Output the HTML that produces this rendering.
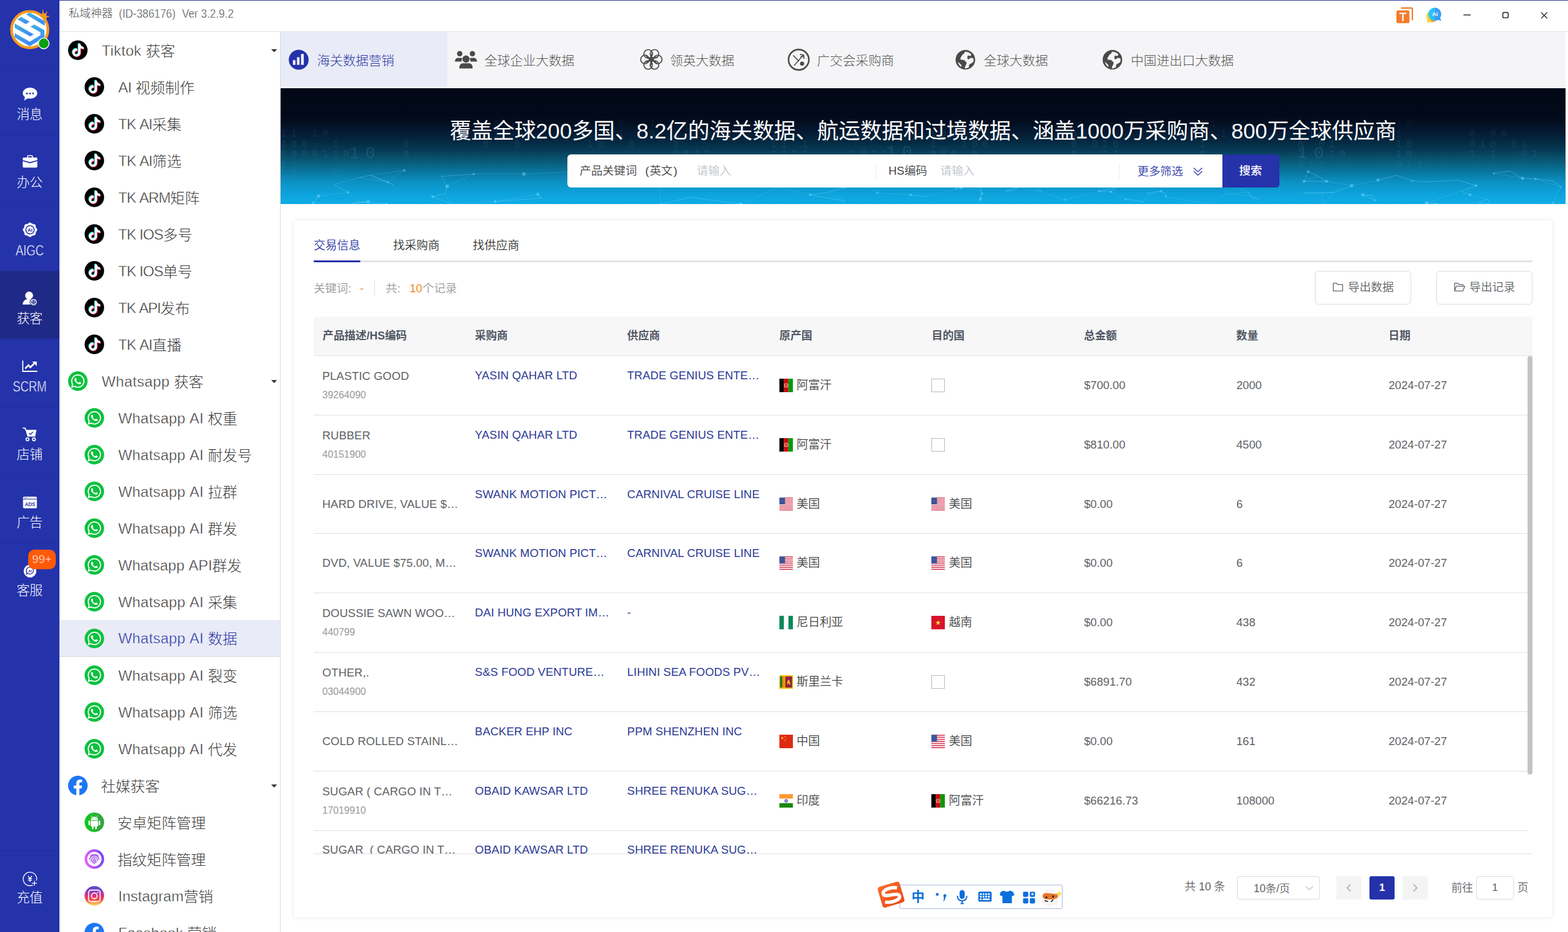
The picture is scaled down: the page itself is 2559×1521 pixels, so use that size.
<!DOCTYPE html>
<html lang="zh-CN"><head><meta charset="utf-8"><title>私域神器</title>
<style>
*{box-sizing:border-box;margin:0;padding:0}
html,body{width:2559px;height:1521px;overflow:hidden;background:#fff}
body{position:relative;font-family:"Liberation Sans","Noto Sans CJK SC",sans-serif;color:#444;-webkit-font-smoothing:antialiased}
.a{position:absolute}
.t{position:absolute;white-space:nowrap;line-height:40px;height:40px}
.lt{font-weight:300}
svg{position:absolute;overflow:visible}
#nav{left:0;top:0;width:97px;height:1521px;background:#2433aa}
#nav .sep{position:absolute;left:0;width:97px;height:2px;background:#2130a1}
#nav .lbl{position:absolute;left:0;width:97px;text-align:center;color:#fff;font-size:21.4px;letter-spacing:-0.3px;text-indent:-0.3px;line-height:30px;height:30px;font-weight:300}
#title{left:97px;top:0;width:2462px;height:52px;background:#fff;border-top:1px solid #2b3494;border-bottom:1px solid #e3e3e3}
#side{left:97px;top:52px;width:361px;height:1469px;background:#fff;border-right:1px solid #dcdcdc;overflow:hidden}
#side .it{position:absolute;left:0;width:360px;height:60px}
#side .it .tx{position:absolute;top:11.8px;height:40px;line-height:40px;font-size:24px;font-weight:300;color:#3a3a3a;white-space:nowrap}
#side .it .tx .l{position:relative;top:-1.1px;-webkit-text-stroke:0.45px #fff}
#side .it.act .tx .l{-webkit-text-stroke:0.45px #e9ebf6}
#side .it.act{background:#e9ebf6;border-bottom:1px solid #d6d8e2}
#side .it.act .tx{margin-top:-0.5px}
#side .it.act .tx{color:#2a36a6}
#tabs{left:458px;top:52px;width:2097px;height:92px;background:#f5f5f7}
#tabs .tx{position:absolute;top:26.7px;height:40px;line-height:40px;font-size:21px;color:#555;white-space:nowrap}
#banner{left:458px;top:144px;width:2097px;height:189px;overflow:hidden;background:linear-gradient(180deg,rgb(2,8,22) 0%,rgb(2,9,25) 22%,rgb(3,14,32) 29%,rgb(4,22,45) 35%,rgb(5,33,58) 42%,rgb(5,45,70) 48%,rgb(6,62,88) 54.5%,rgb(8,84,112) 61%,rgb(9,104,138) 67.5%,rgb(10,124,166) 74%,rgb(11,142,192) 80%,rgb(12,155,210) 86.5%,rgb(14,165,222) 93%,rgb(16,171,229) 100%)}
#card{left:480px;top:359.5px;width:2053px;height:1137.5px;background:#fff;box-shadow:0 0 8px rgba(0,0,0,.09);border-radius:3px}
.th{position:absolute;top:517px;height:63px;line-height:63px;font-size:17.95px;font-weight:700;color:#515763;white-space:nowrap}
.row{position:absolute;left:512px;width:1981px;height:97px;border-bottom:1px solid #e4e6eb}
.c{position:absolute;white-space:nowrap;font-size:18.67px;line-height:26px;height:26px;color:#606266;overflow:hidden}
.u{letter-spacing:0.13px}
.lk{color:#2b3a94}
.hs{font-size:16px;color:#999}
.cn{font-size:19.1px;letter-spacing:-0.2px;color:#444;font-weight:350}
</style>
</head><body>
<div id="tabs" class="a">
<div class="a" style="left:0;top:0;width:272px;height:89px;background:#e9ebf6"></div>
<div class="a" style="left:0;top:91px;width:2097px;height:1px;background:#e6ebe6"></div>
<svg style="left:12.8px;top:28.7px" width="33" height="33" viewBox="0 0 33 33"><circle cx="16.5" cy="16.5" r="16.2" fill="#2531a9"/><rect x="7" y="17.2" width="4.2" height="7.6" fill="#eceefb"/><rect x="13.6" y="12.4" width="4.2" height="12.4" fill="#eceefb"/><rect x="20.2" y="7" width="4.6" height="17.8" fill="#eceefb"/></svg>
<div class="tx lt" style="left:59.6px;color:#2d3aa6">海关数据营销</div>
<svg style="left:283.5px;top:30.8px" width="37" height="30" viewBox="0 0 37 30"><circle cx="8.2" cy="4.6" r="4.4" fill="#4a4a4a"/><circle cx="29" cy="4.6" r="4.4" fill="#4a4a4a"/><path d="M0.4 17.6 C0.6 13.4 2.6 11.4 5.6 11.4 H10 C11 11.4 12 11.7 12.8 12.3 C11.5 13.8 11 15.6 11.4 17.6 Z" fill="#4a4a4a"/><path d="M36.6 17.6 C36.4 13.4 34.4 11.4 31.4 11.4 H27 C26 11.4 25 11.7 24.2 12.3 C25.5 13.8 26 15.6 25.6 17.6 Z" fill="#4a4a4a"/><circle cx="18.5" cy="13.4" r="5.8" fill="#4a4a4a"/><path d="M7.6 27.4 C7.8 22.6 10.4 20.2 14 20.2 H23 C26.6 20.2 29.2 22.6 29.4 27.4 Q29.4 28.8 28 28.8 H9 Q7.6 28.8 7.6 27.4 Z" fill="#4a4a4a"/></svg>
<div class="tx lt" style="left:332.4px;color:#555">全球企业大数据</div>
<svg style="left:586px;top:27.2px" width="38" height="36" viewBox="-19 -18 38 36"><g fill="none" stroke="#4a4a4a" stroke-width="1.7"><circle cx="10.40" cy="0.00" r="7"/><circle cx="5.20" cy="9.01" r="7"/><circle cx="-5.20" cy="9.01" r="7"/><circle cx="-10.40" cy="0.00" r="7"/><circle cx="-5.20" cy="-9.01" r="7"/><circle cx="5.20" cy="-9.01" r="7"/><path d="M0 0 Q 5 -6 10 -5.4" transform="rotate(10)" stroke-width="1.9"/><path d="M0 0 Q 5 -6 10 -5.4" transform="rotate(70)" stroke-width="1.9"/><path d="M0 0 Q 5 -6 10 -5.4" transform="rotate(130)" stroke-width="1.9"/><path d="M0 0 Q 5 -6 10 -5.4" transform="rotate(190)" stroke-width="1.9"/><path d="M0 0 Q 5 -6 10 -5.4" transform="rotate(250)" stroke-width="1.9"/><path d="M0 0 Q 5 -6 10 -5.4" transform="rotate(310)" stroke-width="1.9"/></g><circle cx="0" cy="0" r="3.2" fill="#4a4a4a"/></svg>
<div class="tx lt" style="left:635.4px;color:#555">领英大数据</div>
<svg style="left:826.5px;top:26.7px" width="37" height="37" viewBox="0 0 37 37"><circle cx="18.5" cy="18.5" r="16.6" fill="none" stroke="#4a4a4a" stroke-width="2.6"/><path d="M9.4 11.4 L19 21 M11 28 L26 11" stroke="#4a4a4a" stroke-width="1.6" fill="none"/><path d="M20.6 9.6 L26.4 11 L27.4 17 M21.4 13.6 L27.6 12.4" stroke="#4a4a4a" stroke-width="1.8" fill="none"/><circle cx="24" cy="24.8" r="3.4" fill="#4a4a4a"/></svg>
<div class="tx lt" style="left:875.2px;color:#555">广交会采购商</div>
<svg style="left:1100.5px;top:28.7px" width="33" height="33" viewBox="0 0 33 33"><circle cx="16.5" cy="16.5" r="16" fill="#4a4a4a"/><path d="M16 3.4 L13.6 7.2 L11.8 8 L10.2 11 L8.4 13.6 L8.8 16.4 L11.4 16.6 L14.4 17 L17.2 19.4 L18.6 21.4 L17.6 25 L16 27.6 L15.6 30.6 C18 30.8 20.6 30 22.6 28.6 L22.2 26 L23.8 23.4 L26.6 22.2 L29.6 19.8 C30 17.6 29.8 15.6 29.4 14.2 L26.6 13.4 L24.2 13.8 L22.8 12.2 L23.4 10.2 L25.6 9.8 L26.2 7.6 C23.6 4.8 20 3.2 16 3.4 Z" fill="#f5f5f7"/><path d="M4.2 20 C5 23.4 7 26.4 10 28.4 L9.8 25 L7.2 22.4 Z" fill="#f5f5f7"/><path d="M21 9.4 L23.4 10.2 L22.8 12.2 L24.2 13.8 L22 16 L19.6 14.6 L19.8 11.4 Z" fill="#4a4a4a"/></svg>
<div class="tx lt" style="left:1147.4px;color:#555">全球大数据</div>
<svg style="left:1340.5px;top:28.7px" width="33" height="33" viewBox="0 0 33 33"><circle cx="16.5" cy="16.5" r="16" fill="#4a4a4a"/><path d="M16 3.4 L13.6 7.2 L11.8 8 L10.2 11 L8.4 13.6 L8.8 16.4 L11.4 16.6 L14.4 17 L17.2 19.4 L18.6 21.4 L17.6 25 L16 27.6 L15.6 30.6 C18 30.8 20.6 30 22.6 28.6 L22.2 26 L23.8 23.4 L26.6 22.2 L29.6 19.8 C30 17.6 29.8 15.6 29.4 14.2 L26.6 13.4 L24.2 13.8 L22.8 12.2 L23.4 10.2 L25.6 9.8 L26.2 7.6 C23.6 4.8 20 3.2 16 3.4 Z" fill="#f5f5f7"/><path d="M4.2 20 C5 23.4 7 26.4 10 28.4 L9.8 25 L7.2 22.4 Z" fill="#f5f5f7"/><path d="M21 9.4 L23.4 10.2 L22.8 12.2 L24.2 13.8 L22 16 L19.6 14.6 L19.8 11.4 Z" fill="#4a4a4a"/></svg>
<div class="tx lt" style="left:1387.6px;color:#555">中国进出口大数据</div>
</div>
<div id="banner" class="a">
<div class="t" style="left:0px;top:66.4px;font-size:16px;line-height:18px;height:18px;color:rgba(110,185,220,0.12);letter-spacing:7.4px;font-family:'Liberation Mono',monospace">11&nbsp;10</div>
<div class="t" style="left:0px;top:82.8px;font-size:16px;line-height:18px;height:18px;color:rgba(110,185,220,0.15);letter-spacing:7.4px;font-family:'Liberation Mono',monospace">100&nbsp;&nbsp;1</div>
<div class="t" style="left:0px;top:99.2px;font-size:16px;line-height:18px;height:18px;color:rgba(110,185,220,0.15);letter-spacing:7.4px;font-family:'Liberation Mono',monospace">0000110</div>
<div class="t" style="left:0px;top:115.6px;font-size:16px;line-height:18px;height:18px;color:rgba(110,185,220,0.12);letter-spacing:7.4px;font-family:'Liberation Mono',monospace">11</div>
<div class="t" style="left:0px;top:132px;font-size:16px;line-height:18px;height:18px;color:rgba(110,185,220,0.09);letter-spacing:7.4px;font-family:'Liberation Mono',monospace">00&nbsp;&nbsp;&nbsp;0</div>
<div class="t" style="left:0px;top:148.4px;font-size:16px;line-height:18px;height:18px;color:rgba(110,185,220,0.07);letter-spacing:7.4px;font-family:'Liberation Mono',monospace">1&nbsp;000</div>
<div class="t" style="left:200px;top:82.8px;font-size:16px;line-height:18px;height:18px;color:rgba(110,185,220,0.15);letter-spacing:7.4px;font-family:'Liberation Mono',monospace">0</div>
<div class="t" style="left:200px;top:99.2px;font-size:16px;line-height:18px;height:18px;color:rgba(110,185,220,0.15);letter-spacing:7.4px;font-family:'Liberation Mono',monospace">0</div>
<div class="t" style="left:330px;top:50px;font-size:16px;line-height:18px;height:18px;color:rgba(110,185,220,0.08);letter-spacing:7.4px;font-family:'Liberation Mono',monospace">10</div>
<div class="t" style="left:330px;top:66.4px;font-size:16px;line-height:18px;height:18px;color:rgba(110,185,220,0.12);letter-spacing:7.4px;font-family:'Liberation Mono',monospace">01</div>
<div class="t" style="left:330px;top:82.8px;font-size:16px;line-height:18px;height:18px;color:rgba(110,185,220,0.15);letter-spacing:7.4px;font-family:'Liberation Mono',monospace">0&nbsp;&nbsp;0</div>
<div class="t" style="left:500px;top:50px;font-size:16px;line-height:18px;height:18px;color:rgba(110,185,220,0.08);letter-spacing:7.4px;font-family:'Liberation Mono',monospace">1000&nbsp;&nbsp;1</div>
<div class="t" style="left:500px;top:66.4px;font-size:16px;line-height:18px;height:18px;color:rgba(110,185,220,0.12);letter-spacing:7.4px;font-family:'Liberation Mono',monospace">1&nbsp;11&nbsp;&nbsp;0</div>
<div class="t" style="left:500px;top:82.8px;font-size:16px;line-height:18px;height:18px;color:rgba(110,185,220,0.15);letter-spacing:7.4px;font-family:'Liberation Mono',monospace">10&nbsp;&nbsp;0</div>
<div class="t" style="left:640px;top:50px;font-size:16px;line-height:18px;height:18px;color:rgba(110,185,220,0.08);letter-spacing:7.4px;font-family:'Liberation Mono',monospace">001</div>
<div class="t" style="left:640px;top:66.4px;font-size:16px;line-height:18px;height:18px;color:rgba(110,185,220,0.12);letter-spacing:7.4px;font-family:'Liberation Mono',monospace">1&nbsp;&nbsp;0</div>
<div class="t" style="left:640px;top:82.8px;font-size:16px;line-height:18px;height:18px;color:rgba(110,185,220,0.15);letter-spacing:7.4px;font-family:'Liberation Mono',monospace">0</div>
<div class="t" style="left:640px;top:99.2px;font-size:16px;line-height:18px;height:18px;color:rgba(110,185,220,0.15);letter-spacing:7.4px;font-family:'Liberation Mono',monospace">0011</div>
<div class="t" style="left:800px;top:66.4px;font-size:16px;line-height:18px;height:18px;color:rgba(110,185,220,0.12);letter-spacing:7.4px;font-family:'Liberation Mono',monospace">1&nbsp;1</div>
<div class="t" style="left:800px;top:82.8px;font-size:16px;line-height:18px;height:18px;color:rgba(110,185,220,0.15);letter-spacing:7.4px;font-family:'Liberation Mono',monospace">11&nbsp;1</div>
<div class="t" style="left:800px;top:99.2px;font-size:16px;line-height:18px;height:18px;color:rgba(110,185,220,0.15);letter-spacing:7.4px;font-family:'Liberation Mono',monospace">1111</div>
<div class="t" style="left:930px;top:50px;font-size:16px;line-height:18px;height:18px;color:rgba(110,185,220,0.08);letter-spacing:7.4px;font-family:'Liberation Mono',monospace">000</div>
<div class="t" style="left:930px;top:66.4px;font-size:16px;line-height:18px;height:18px;color:rgba(110,185,220,0.12);letter-spacing:7.4px;font-family:'Liberation Mono',monospace">0&nbsp;1</div>
<div class="t" style="left:930px;top:99.2px;font-size:16px;line-height:18px;height:18px;color:rgba(110,185,220,0.15);letter-spacing:7.4px;font-family:'Liberation Mono',monospace">1011</div>
<div class="t" style="left:930px;top:115.6px;font-size:16px;line-height:18px;height:18px;color:rgba(110,185,220,0.12);letter-spacing:7.4px;font-family:'Liberation Mono',monospace">0&nbsp;1</div>
<div class="t" style="left:930px;top:132px;font-size:16px;line-height:18px;height:18px;color:rgba(110,185,220,0.09);letter-spacing:7.4px;font-family:'Liberation Mono',monospace">100</div>
<div class="t" style="left:1060px;top:66.4px;font-size:16px;line-height:18px;height:18px;color:rgba(110,185,220,0.12);letter-spacing:7.4px;font-family:'Liberation Mono',monospace">1001&nbsp;&nbsp;10</div>
<div class="t" style="left:1060px;top:82.8px;font-size:16px;line-height:18px;height:18px;color:rgba(110,185,220,0.15);letter-spacing:7.4px;font-family:'Liberation Mono',monospace">1&nbsp;&nbsp;100</div>
<div class="t" style="left:1060px;top:99.2px;font-size:16px;line-height:18px;height:18px;color:rgba(110,185,220,0.15);letter-spacing:7.4px;font-family:'Liberation Mono',monospace">000&nbsp;0</div>
<div class="t" style="left:1060px;top:115.6px;font-size:16px;line-height:18px;height:18px;color:rgba(110,185,220,0.12);letter-spacing:7.4px;font-family:'Liberation Mono',monospace">100&nbsp;&nbsp;01</div>
<div class="t" style="left:1060px;top:132px;font-size:16px;line-height:18px;height:18px;color:rgba(110,185,220,0.09);letter-spacing:7.4px;font-family:'Liberation Mono',monospace">0&nbsp;0&nbsp;0</div>
<div class="t" style="left:1060px;top:148.4px;font-size:16px;line-height:18px;height:18px;color:rgba(110,185,220,0.07);letter-spacing:7.4px;font-family:'Liberation Mono',monospace">0&nbsp;&nbsp;00000</div>
<div class="t" style="left:1290px;top:66.4px;font-size:16px;line-height:18px;height:18px;color:rgba(110,185,220,0.12);letter-spacing:7.4px;font-family:'Liberation Mono',monospace">00</div>
<div class="t" style="left:1290px;top:82.8px;font-size:16px;line-height:18px;height:18px;color:rgba(110,185,220,0.15);letter-spacing:7.4px;font-family:'Liberation Mono',monospace">0&nbsp;010</div>
<div class="t" style="left:1290px;top:99.2px;font-size:16px;line-height:18px;height:18px;color:rgba(110,185,220,0.15);letter-spacing:7.4px;font-family:'Liberation Mono',monospace">0&nbsp;&nbsp;11</div>
<div class="t" style="left:1290px;top:115.6px;font-size:16px;line-height:18px;height:18px;color:rgba(110,185,220,0.12);letter-spacing:7.4px;font-family:'Liberation Mono',monospace">1&nbsp;&nbsp;&nbsp;1</div>
<div class="t" style="left:1290px;top:132px;font-size:16px;line-height:18px;height:18px;color:rgba(110,185,220,0.09);letter-spacing:7.4px;font-family:'Liberation Mono',monospace">1&nbsp;11&nbsp;1</div>
<div class="t" style="left:1500px;top:50px;font-size:16px;line-height:18px;height:18px;color:rgba(110,185,220,0.08);letter-spacing:7.4px;font-family:'Liberation Mono',monospace">11&nbsp;&nbsp;0</div>
<div class="t" style="left:1500px;top:66.4px;font-size:16px;line-height:18px;height:18px;color:rgba(110,185,220,0.12);letter-spacing:7.4px;font-family:'Liberation Mono',monospace">0&nbsp;10</div>
<div class="t" style="left:1500px;top:82.8px;font-size:16px;line-height:18px;height:18px;color:rgba(110,185,220,0.15);letter-spacing:7.4px;font-family:'Liberation Mono',monospace">1</div>
<div class="t" style="left:1500px;top:99.2px;font-size:16px;line-height:18px;height:18px;color:rgba(110,185,220,0.15);letter-spacing:7.4px;font-family:'Liberation Mono',monospace">0</div>
<div class="t" style="left:1500px;top:115.6px;font-size:16px;line-height:18px;height:18px;color:rgba(110,185,220,0.12);letter-spacing:7.4px;font-family:'Liberation Mono',monospace">0&nbsp;0</div>
<div class="t" style="left:1660px;top:50px;font-size:16px;line-height:18px;height:18px;color:rgba(110,185,220,0.08);letter-spacing:7.4px;font-family:'Liberation Mono',monospace">1&nbsp;&nbsp;10</div>
<div class="t" style="left:1660px;top:66.4px;font-size:16px;line-height:18px;height:18px;color:rgba(110,185,220,0.12);letter-spacing:7.4px;font-family:'Liberation Mono',monospace">1100</div>
<div class="t" style="left:1660px;top:82.8px;font-size:16px;line-height:18px;height:18px;color:rgba(110,185,220,0.15);letter-spacing:7.4px;font-family:'Liberation Mono',monospace">0&nbsp;01</div>
<div class="t" style="left:1660px;top:99.2px;font-size:16px;line-height:18px;height:18px;color:rgba(110,185,220,0.15);letter-spacing:7.4px;font-family:'Liberation Mono',monospace">1&nbsp;&nbsp;10</div>
<div class="t" style="left:1660px;top:115.6px;font-size:16px;line-height:18px;height:18px;color:rgba(110,185,220,0.12);letter-spacing:7.4px;font-family:'Liberation Mono',monospace">011</div>
<div class="t" style="left:1820px;top:50px;font-size:16px;line-height:18px;height:18px;color:rgba(110,185,220,0.08);letter-spacing:7.4px;font-family:'Liberation Mono',monospace">10</div>
<div class="t" style="left:1820px;top:66.4px;font-size:16px;line-height:18px;height:18px;color:rgba(110,185,220,0.12);letter-spacing:7.4px;font-family:'Liberation Mono',monospace">1</div>
<div class="t" style="left:1820px;top:82.8px;font-size:16px;line-height:18px;height:18px;color:rgba(110,185,220,0.15);letter-spacing:7.4px;font-family:'Liberation Mono',monospace">10</div>
<div class="t" style="left:1820px;top:99.2px;font-size:16px;line-height:18px;height:18px;color:rgba(110,185,220,0.15);letter-spacing:7.4px;font-family:'Liberation Mono',monospace">10</div>
<div class="t" style="left:1820px;top:115.6px;font-size:16px;line-height:18px;height:18px;color:rgba(110,185,220,0.12);letter-spacing:7.4px;font-family:'Liberation Mono',monospace">011</div>
<div class="t" style="left:1940px;top:66.4px;font-size:16px;line-height:18px;height:18px;color:rgba(110,185,220,0.12);letter-spacing:7.4px;font-family:'Liberation Mono',monospace">0&nbsp;00</div>
<div class="t" style="left:1940px;top:82.8px;font-size:16px;line-height:18px;height:18px;color:rgba(110,185,220,0.15);letter-spacing:7.4px;font-family:'Liberation Mono',monospace">010&nbsp;01</div>
<div class="t" style="left:1940px;top:99.2px;font-size:16px;line-height:18px;height:18px;color:rgba(110,185,220,0.15);letter-spacing:7.4px;font-family:'Liberation Mono',monospace">1&nbsp;1&nbsp;&nbsp;01</div>
<div class="t" style="left:112px;top:92px;font-size:27px;line-height:30px;height:30px;color:rgba(110,185,220,.17);letter-spacing:10px;font-family:'Liberation Mono',monospace">10</div>
<div class="t" style="left:988px;top:90px;font-size:27px;line-height:30px;height:30px;color:rgba(110,185,220,.17);letter-spacing:10px;font-family:'Liberation Mono',monospace">10</div>
<div class="t" style="left:1660px;top:92px;font-size:27px;line-height:30px;height:30px;color:rgba(110,185,220,.17);letter-spacing:10px;font-family:'Liberation Mono',monospace">10</div>
<svg style="left:0;top:110px" width="2097" height="79" viewBox="0 0 2097 79"><g stroke="rgba(120,215,255,.22)" stroke-width="1" fill="rgba(130,225,255,.4)"><path d="M974 61 L951 45"/><path d="M974 61 L973 43"/><path d="M534 47 L531 50"/><path d="M534 47 L538 43"/><path d="M1941 64 L1926 58"/><path d="M1941 64 L1970 71"/><path d="M268 62 L248 67"/><path d="M268 62 L272 50"/><path d="M53 77 L62 66"/><path d="M53 77 L117 78"/><path d="M1921 40 L1951 49"/><path d="M1921 40 L1869 43"/><path d="M959 36 L973 43"/><path d="M959 36 L951 45"/><path d="M1926 58 L1941 64"/><path d="M1926 58 L1951 49"/><path d="M1951 49 L1926 58"/><path d="M1951 49 L1921 40"/><path d="M616 38 L617 25"/><path d="M616 38 L545 27"/><path d="M621 79 L668 68"/><path d="M621 79 L616 38"/><path d="M1597 71 L1587 69"/><path d="M1597 71 L1581 65"/><path d="M62 66 L53 77"/><path d="M62 66 L110 60"/><path d="M262 34 L272 50"/><path d="M262 34 L315 30"/><path d="M175 43 L184 48"/><path d="M175 43 L146 32"/><path d="M127 76 L117 78"/><path d="M127 76 L143 75"/><path d="M1103 54 L1110 53"/><path d="M1103 54 L1093 42"/><path d="M1587 69 L1597 71"/><path d="M1587 69 L1581 65"/><path d="M1748 49 L1719 60"/><path d="M1748 49 L1707 42"/><path d="M1821 32 L1847 41"/><path d="M1821 32 L1791 40"/><path d="M1497 30 L1490 35"/><path d="M1497 30 L1475 32"/><path d="M146 32 L128 36"/><path d="M146 32 L175 43"/><path d="M2027 37 L2048 38"/><path d="M2027 37 L2005 25"/><path d="M1056 67 L1028 64"/><path d="M1056 67 L1103 54"/><path d="M1786 73 L1782 65"/><path d="M1786 73 L1766 64"/><path d="M1233 50 L1241 59"/><path d="M1233 50 L1203 51"/><path d="M2077 77 L2089 51"/><path d="M2077 77 L1974 78"/><path d="M1580 60 L1581 65"/><path d="M1580 60 L1587 69"/><path d="M1437 58 L1444 62"/><path d="M1437 58 L1414 61"/><path d="M1669 61 L1700 61"/><path d="M1669 61 L1719 60"/><path d="M951 45 L973 43"/><path d="M951 45 L959 36"/><path d="M117 78 L127 76"/><path d="M117 78 L143 75"/><path d="M1145 62 L1143 56"/><path d="M1145 62 L1142 71"/><path d="M668 68 L621 79"/><path d="M668 68 L751 79"/><path d="M1336 58 L1355 59"/><path d="M1336 58 L1361 53"/><path d="M426 69 L420 63"/><path d="M426 69 L350 75"/><path d="M864 64 L893 60"/><path d="M864 64 L921 74"/><path d="M1093 42 L1081 43"/><path d="M1093 42 L1103 39"/><path d="M509 28 L495 26"/><path d="M509 28 L487 26"/><path d="M1974 78 L1955 77"/><path d="M1974 78 L1970 71"/><path d="M1980 29 L2005 25"/><path d="M1980 29 L2027 37"/><path d="M1409 75 L1379 71"/><path d="M1409 75 L1418 64"/><path d="M272 50 L268 62"/><path d="M272 50 L262 34"/><path d="M617 25 L616 38"/><path d="M617 25 L545 27"/><path d="M1203 51 L1195 57"/><path d="M1203 51 L1183 58"/><path d="M1700 79 L1700 61"/><path d="M1700 79 L1719 60"/><path d="M487 26 L495 26"/><path d="M487 26 L509 28"/><path d="M184 48 L175 43"/><path d="M184 48 L146 32"/><path d="M1355 59 L1361 53"/><path d="M1355 59 L1336 58"/><path d="M1143 56 L1145 62"/><path d="M1143 56 L1141 45"/><path d="M966 26 L959 36"/><path d="M966 26 L1001 26"/><path d="M1268 24 L1289 25"/><path d="M1268 24 L1310 35"/><path d="M315 30 L262 34"/><path d="M315 30 L272 50"/><path d="M128 36 L146 32"/><path d="M128 36 L175 43"/><path d="M1670 42 L1692 33"/><path d="M1670 42 L1707 42"/><path d="M1078 33 L1081 43"/><path d="M1078 33 L1103 39"/><path d="M173 79 L143 75"/><path d="M173 79 L127 76"/><path d="M1391 44 L1397 38"/><path d="M1391 44 L1361 53"/><path d="M1475 32 L1490 35"/><path d="M1475 32 L1497 30"/><path d="M1547 48 L1542 63"/><path d="M1547 48 L1580 60"/><path d="M1885 79 L1870 77"/><path d="M1885 79 L1955 77"/><path d="M1581 65 L1587 69"/><path d="M1581 65 L1580 60"/><path d="M420 63 L426 69"/><path d="M420 63 L350 75"/><path d="M2076 41 L2048 38"/><path d="M2076 41 L2089 51"/><path d="M1766 64 L1782 65"/><path d="M1766 64 L1786 73"/><path d="M973 43 L951 45"/><path d="M973 43 L959 36"/><path d="M1791 40 L1821 32"/><path d="M1791 40 L1748 49"/><path d="M1241 59 L1233 50"/><path d="M1241 59 L1203 51"/><path d="M1388 24 L1397 38"/><path d="M1388 24 L1342 35"/><path d="M1700 61 L1719 60"/><path d="M1700 61 L1669 61"/><path d="M1289 25 L1268 24"/><path d="M1289 25 L1310 35"/><path d="M1542 63 L1580 60"/><path d="M1542 63 L1581 65"/><path d="M545 27 L509 28"/><path d="M545 27 L538 43"/><path d="M1361 53 L1355 59"/><path d="M1361 53 L1336 58"/><path d="M1445 67 L1444 62"/><path d="M1445 67 L1437 58"/><path d="M1444 62 L1437 58"/><path d="M1444 62 L1445 67"/><path d="M1142 71 L1145 62"/><path d="M1142 71 L1143 56"/><path d="M2005 25 L1980 29"/><path d="M2005 25 L2027 37"/><path d="M248 67 L268 62"/><path d="M248 67 L278 78"/><path d="M87 47 L110 60"/><path d="M87 47 L128 36"/><path d="M1028 64 L1056 67"/><path d="M1028 64 L974 61"/><path d="M1869 43 L1847 41"/><path d="M1869 43 L1921 40"/><path d="M1310 35 L1318 45"/><path d="M1310 35 L1342 35"/><path d="M1490 35 L1497 30"/><path d="M1490 35 L1475 32"/><path d="M1280 72 L1241 59"/><path d="M1280 72 L1336 58"/><path d="M1512 78 L1542 63"/><path d="M1512 78 L1445 67"/><path d="M1081 43 L1093 42"/><path d="M1081 43 L1103 39"/><path d="M1544 30 L1497 30"/><path d="M1544 30 L1547 48"/><path d="M110 60 L87 47"/><path d="M110 60 L127 76"/><path d="M538 43 L534 47"/><path d="M538 43 L531 50"/><path d="M2048 38 L2027 37"/><path d="M2048 38 L2076 41"/><path d="M1103 39 L1093 42"/><path d="M1103 39 L1081 43"/><path d="M1342 35 L1310 35"/><path d="M1342 35 L1318 45"/><path d="M1782 65 L1766 64"/><path d="M1782 65 L1786 73"/><path d="M397 30 L315 30"/><path d="M397 30 L487 26"/><path d="M1318 45 L1310 35"/><path d="M1318 45 L1342 35"/><path d="M919 52 L893 60"/><path d="M919 52 L951 45"/><path d="M693 29 L617 25"/><path d="M693 29 L616 38"/><path d="M1379 71 L1409 75"/><path d="M1379 71 L1355 59"/><path d="M893 60 L864 64"/><path d="M893 60 L919 52"/><path d="M1847 41 L1869 43"/><path d="M1847 41 L1821 32"/><path d="M921 74 L893 60"/><path d="M921 74 L864 64"/><path d="M495 26 L487 26"/><path d="M495 26 L509 28"/><path d="M781 44 L812 51"/><path d="M781 44 L817 24"/><path d="M751 79 L668 68"/><path d="M751 79 L812 51"/><path d="M1141 45 L1143 56"/><path d="M1141 45 L1110 53"/><path d="M350 75 L278 78"/><path d="M350 75 L426 69"/><path d="M1414 61 L1418 64"/><path d="M1414 61 L1437 58"/><path d="M531 50 L534 47"/><path d="M531 50 L538 43"/><path d="M1195 57 L1183 58"/><path d="M1195 57 L1203 51"/><path d="M1110 53 L1103 54"/><path d="M1110 53 L1143 56"/><path d="M1418 64 L1414 61"/><path d="M1418 64 L1437 58"/><path d="M1707 42 L1692 33"/><path d="M1707 42 L1670 42"/><path d="M1719 60 L1700 61"/><path d="M1719 60 L1748 49"/><path d="M1677 26 L1692 33"/><path d="M1677 26 L1670 42"/><path d="M1692 33 L1677 26"/><path d="M1692 33 L1707 42"/><path d="M817 24 L781 44"/><path d="M817 24 L812 51"/><path d="M1955 77 L1974 78"/><path d="M1955 77 L1970 71"/><path d="M2089 51 L2076 41"/><path d="M2089 51 L2048 38"/><path d="M909 26 L966 26"/><path d="M909 26 L959 36"/><path d="M1870 77 L1885 79"/><path d="M1870 77 L1926 58"/><path d="M1183 58 L1195 57"/><path d="M1183 58 L1203 51"/><path d="M1397 38 L1391 44"/><path d="M1397 38 L1388 24"/><path d="M278 78 L248 67"/><path d="M278 78 L268 62"/><path d="M1175 31 L1141 45"/><path d="M1175 31 L1203 51"/><path d="M1001 26 L966 26"/><path d="M1001 26 L959 36"/><path d="M143 75 L127 76"/><path d="M143 75 L117 78"/><path d="M812 51 L781 44"/><path d="M812 51 L864 64"/><path d="M202 24 L146 32"/><path d="M202 24 L175 43"/><path d="M1970 71 L1974 78"/><path d="M1970 71 L1955 77"/><circle cx="974" cy="61" r="1.7" stroke="none"/><circle cx="1941" cy="64" r="2.3" stroke="none"/><circle cx="53" cy="77" r="1.9" stroke="none"/><circle cx="959" cy="36" r="1.5" stroke="none"/><circle cx="1951" cy="49" r="2.3" stroke="none"/><circle cx="621" cy="79" r="1.6" stroke="none"/><circle cx="62" cy="66" r="2.9" stroke="none"/><circle cx="175" cy="43" r="1.7" stroke="none"/><circle cx="1103" cy="54" r="1.7" stroke="none"/><circle cx="1748" cy="49" r="3.0" stroke="none"/><circle cx="1497" cy="30" r="2.3" stroke="none"/><circle cx="2027" cy="37" r="2.7" stroke="none"/><circle cx="1786" cy="73" r="1.6" stroke="none"/><circle cx="2077" cy="77" r="1.8" stroke="none"/><circle cx="1437" cy="58" r="1.7" stroke="none"/><circle cx="951" cy="45" r="2.8" stroke="none"/><circle cx="1145" cy="62" r="1.7" stroke="none"/><circle cx="1336" cy="58" r="1.9" stroke="none"/><circle cx="864" cy="64" r="1.9" stroke="none"/><circle cx="509" cy="28" r="2.8" stroke="none"/><circle cx="1980" cy="29" r="1.7" stroke="none"/><circle cx="272" cy="50" r="2.9" stroke="none"/><circle cx="1203" cy="51" r="2.2" stroke="none"/><circle cx="487" cy="26" r="2.4" stroke="none"/><circle cx="1355" cy="59" r="2.1" stroke="none"/><circle cx="966" cy="26" r="2.6" stroke="none"/><circle cx="315" cy="30" r="1.9" stroke="none"/><circle cx="1670" cy="42" r="2.4" stroke="none"/><circle cx="173" cy="79" r="2.3" stroke="none"/><circle cx="1475" cy="32" r="1.6" stroke="none"/><circle cx="1885" cy="79" r="2.0" stroke="none"/><circle cx="420" cy="63" r="2.7" stroke="none"/><circle cx="1766" cy="64" r="2.8" stroke="none"/><circle cx="1791" cy="40" r="2.7" stroke="none"/><circle cx="1388" cy="24" r="1.6" stroke="none"/><circle cx="1289" cy="25" r="1.6" stroke="none"/><circle cx="545" cy="27" r="2.2" stroke="none"/><circle cx="1445" cy="67" r="1.5" stroke="none"/><circle cx="1142" cy="71" r="2.6" stroke="none"/><circle cx="248" cy="67" r="2.3" stroke="none"/><circle cx="1028" cy="64" r="2.2" stroke="none"/><circle cx="1310" cy="35" r="1.7" stroke="none"/><circle cx="1280" cy="72" r="1.6" stroke="none"/><circle cx="1081" cy="43" r="2.1" stroke="none"/><circle cx="110" cy="60" r="2.1" stroke="none"/><circle cx="2048" cy="38" r="2.0" stroke="none"/><circle cx="1342" cy="35" r="1.9" stroke="none"/><circle cx="397" cy="30" r="3.0" stroke="none"/><circle cx="919" cy="52" r="2.1" stroke="none"/><circle cx="1379" cy="71" r="1.7" stroke="none"/><circle cx="1847" cy="41" r="1.5" stroke="none"/><circle cx="495" cy="26" r="2.6" stroke="none"/><circle cx="751" cy="79" r="2.7" stroke="none"/><circle cx="350" cy="75" r="2.4" stroke="none"/><circle cx="531" cy="50" r="1.6" stroke="none"/><circle cx="1110" cy="53" r="2.2" stroke="none"/><circle cx="1707" cy="42" r="2.5" stroke="none"/><circle cx="1677" cy="26" r="2.3" stroke="none"/><circle cx="817" cy="24" r="2.5" stroke="none"/><circle cx="2089" cy="51" r="1.6" stroke="none"/><circle cx="1870" cy="77" r="2.8" stroke="none"/><circle cx="1397" cy="38" r="1.6" stroke="none"/><circle cx="1175" cy="31" r="2.4" stroke="none"/><circle cx="143" cy="75" r="2.6" stroke="none"/><circle cx="202" cy="24" r="2.0" stroke="none"/></g></svg>
<div class="t" id="hl" style="left:0;width:2097px;text-align:center;top:40px;height:60px;line-height:60px;font-size:35.17px;color:#fff;font-weight:400">覆盖全球200多国、8.2亿的海关数据、航运数据和过境数据、涵盖1000万采购商、800万全球供应商</div>
<div class="a" style="left:468px;top:108px;width:1069px;height:54px;background:#fff;border-radius:6px 0 0 6px"></div>
<div class="a" style="left:1536.5px;top:108px;width:93px;height:54px;background:#2632aa;border-radius:0 5px 5px 0"></div>
<div class="t " style="left:488px;top:115px;font-size:18.67px;color:#444;font-weight:350;line-height:40px;height:40px;">产品关键词<span style="margin-left:13.6px;margin-right:1.2px">(</span>英文<span style="margin-left:1.6px">)</span></div>
<div class="t " style="left:679px;top:115px;font-size:18.67px;color:#c0c4cc;font-weight:350;line-height:40px;height:40px;">请输入</div>
<div class="a" style="left:971px;top:122px;width:1px;height:26px;background:#ececec"></div>
<div class="t " style="left:992px;top:115px;font-size:18.67px;color:#444;font-weight:350;line-height:40px;height:40px;">HS编码</div>
<div class="t " style="left:1076.5px;top:115px;font-size:18.67px;color:#c0c4cc;font-weight:350;line-height:40px;height:40px;">请输入</div>
<div class="a" style="left:1368px;top:122px;width:1px;height:26px;background:#ececec"></div>
<div class="t " style="left:1398.3px;top:116px;font-size:18.67px;color:#2d3aa6;font-weight:350;line-height:40px;height:40px;">更多筛选</div>
<svg style="left:1489px;top:128.5px" width="16" height="14" viewBox="0 0 16 14"><path d="M1 1 L8 7.4 L15 1 M1 6.4 L8 12.8 L15 6.4" fill="none" stroke="#2d3aa6" stroke-width="1.3"/></svg>
<div class="t " style="left:1564.3px;top:114.5px;font-size:18.67px;color:#fff;font-weight:500;line-height:40px;height:40px;">搜索</div>
</div>
<div id="card" class="a"></div>
<div class="t " style="left:512px;top:381.3px;font-size:19px;color:#2d3aa6;font-weight:350;line-height:40px;height:40px;">交易信息</div>
<div class="t " style="left:641.4px;top:381.3px;font-size:19px;color:#333;font-weight:350;line-height:40px;height:40px;">找采购商</div>
<div class="t " style="left:771.4px;top:381.3px;font-size:19px;color:#333;font-weight:350;line-height:40px;height:40px;">找供应商</div>
<div class="a" style="left:512px;top:425px;width:1989px;height:3px;background:#e2e2e2"></div>
<div class="a" style="left:512px;top:425px;width:76px;height:3px;background:#2531a9"></div>
<div class="t " style="left:512px;top:451.1px;font-size:18.67px;color:#999;font-weight:350;line-height:40px;height:40px;">关键词:</div>
<div class="t " style="left:587.6px;top:451.1px;font-size:18.67px;color:#f08a24;font-weight:400;line-height:40px;height:40px;">-</div>
<div class="a" style="left:611px;top:457px;width:1px;height:25px;background:#e2e2e2"></div>
<div class="t " style="left:629.6px;top:451.1px;font-size:18.67px;color:#999;font-weight:350;line-height:40px;height:40px;">共:</div>
<div class="t " style="left:668.4px;top:451.1px;font-size:18.67px;color:#f08a24;font-weight:400;line-height:40px;height:40px;">10</div>
<div class="t " style="left:689.6px;top:451.1px;font-size:18.67px;color:#999;font-weight:350;line-height:40px;height:40px;">个记录</div>
<div class="a" style="left:2146px;top:442px;width:157px;height:54.5px;border:1px solid #dcdcdc;border-radius:6px;background:#fff"></div>
<svg style="left:2175px;top:460.4px" width="18" height="16" viewBox="0 0 18 16"><path d="M1 2.2 H6.4 L8.2 4.4 H16.2 V14.8 H1 Z" fill="none" stroke="#606266" stroke-width="1.3" stroke-linejoin="round"/></svg>
<div class="t " style="left:2200px;top:448.6px;font-size:18.67px;color:#606266;font-weight:350;line-height:40px;height:40px;">导出数据</div>
<div class="a" style="left:2344px;top:442px;width:157px;height:54.5px;border:1px solid #dcdcdc;border-radius:6px;background:#fff"></div>
<svg style="left:2373px;top:460.4px" width="18" height="16" viewBox="0 0 18 16"><path d="M1 14.8 V2.2 H6.4 L8.2 4.4 H14.6 V7.2 M1 14.8 L3.6 7.2 H17.4 L14.6 14.8 Z" fill="none" stroke="#606266" stroke-width="1.3" stroke-linejoin="round"/></svg>
<div class="t " style="left:2398px;top:448.6px;font-size:18.67px;color:#606266;font-weight:350;line-height:40px;height:40px;">导出记录</div>
<div class="a" style="left:512px;top:517px;width:1989px;height:64px;background:#f7f7f7;border-bottom:1px solid #e0e0e0"></div>
<div class="th" style="left:526.5px">产品描述/HS编码</div>
<div class="th" style="left:775px">采购商</div>
<div class="th" style="left:1023.5px">供应商</div>
<div class="th" style="left:1272px">原产国</div>
<div class="th" style="left:1520.5px">目的国</div>
<div class="th" style="left:1769px">总金额</div>
<div class="th" style="left:2017.5px">数量</div>
<div class="th" style="left:2266px">日期</div>
<div class="a" style="left:0;top:581px;width:2559px;height:812.4px;overflow:hidden">
<div class="a" style="left:512px;top:96px;width:1981px;height:1px;background:#e0e0e0"></div>
<div class="c u" style="left:526px;top:19.5px">PLASTIC GOOD</div>
<div class="c hs" style="left:526px;top:50.7px">39264090</div>
<div class="c lk u" style="left:775.1px;top:18.7px">YASIN QAHAR LTD</div>
<div class="c lk u" style="left:1023.6px;top:18.7px">TRADE GENIUS ENTE…</div>
<div class="a" style="left:1271.9px;top:37px;width:22px;height:22px"><svg style="left:0;top:0" width="22" height="22" viewBox="0 0 22 22" preserveAspectRatio="none"><rect width="7.4" height="22" fill="#000"/><rect x="7.3" width="7.4" height="22" fill="#c9050c"/><rect x="14.6" width="7.4" height="22" fill="#079a0b"/><circle cx="11" cy="11" r="3" fill="none" stroke="#f0b99a" stroke-width="1.1"/><circle cx="11" cy="11" r="1.2" fill="#e88a6a"/></svg></div><div class="c cn" style="left:1300.1px;top:35px">阿富汗</div>
<div class="a" style="left:1520.4px;top:37px;width:22px;height:22px;border:1px solid #b9b9b9;background:#fff"></div>
<div class="c" style="left:1769.2px;top:35px">$700.00</div>
<div class="c" style="left:2017.7px;top:35px">2000</div>
<div class="c" style="left:2266.2px;top:35px">2024-07-27</div>
<div class="a" style="left:512px;top:193px;width:1981px;height:1px;background:#e0e0e0"></div>
<div class="c u" style="left:526px;top:116.5px">RUBBER</div>
<div class="c hs" style="left:526px;top:147.7px">40151900</div>
<div class="c lk u" style="left:775.1px;top:115.7px">YASIN QAHAR LTD</div>
<div class="c lk u" style="left:1023.6px;top:115.7px">TRADE GENIUS ENTE…</div>
<div class="a" style="left:1271.9px;top:134px;width:22px;height:22px"><svg style="left:0;top:0" width="22" height="22" viewBox="0 0 22 22" preserveAspectRatio="none"><rect width="7.4" height="22" fill="#000"/><rect x="7.3" width="7.4" height="22" fill="#c9050c"/><rect x="14.6" width="7.4" height="22" fill="#079a0b"/><circle cx="11" cy="11" r="3" fill="none" stroke="#f0b99a" stroke-width="1.1"/><circle cx="11" cy="11" r="1.2" fill="#e88a6a"/></svg></div><div class="c cn" style="left:1300.1px;top:132px">阿富汗</div>
<div class="a" style="left:1520.4px;top:134px;width:22px;height:22px;border:1px solid #b9b9b9;background:#fff"></div>
<div class="c" style="left:1769.2px;top:132px">$810.00</div>
<div class="c" style="left:2017.7px;top:132px">4500</div>
<div class="c" style="left:2266.2px;top:132px">2024-07-27</div>
<div class="a" style="left:512px;top:289px;width:1981px;height:1px;background:#e0e0e0"></div>
<div class="c u" style="left:526px;top:228.8px">HARD DRIVE, VALUE $…</div>
<div class="c lk u" style="left:775.1px;top:212.7px">SWANK MOTION PICT…</div>
<div class="c lk u" style="left:1023.6px;top:212.7px">CARNIVAL CRUISE LINE</div>
<div class="a" style="left:1271.9px;top:231px;width:22px;height:21px"><svg style="left:0;top:0" width="22" height="21" viewBox="0 0 22 22" preserveAspectRatio="none"><rect width="22" height="22" fill="#fff"/><rect y="0.00" width="22" height="1.7" fill="#d8425a"/><rect y="3.38" width="22" height="1.7" fill="#d8425a"/><rect y="6.77" width="22" height="1.7" fill="#d8425a"/><rect y="10.15" width="22" height="1.7" fill="#d8425a"/><rect y="13.54" width="22" height="1.7" fill="#d8425a"/><rect y="16.92" width="22" height="1.7" fill="#d8425a"/><rect y="20.31" width="22" height="1.7" fill="#d8425a"/><rect width="9.2" height="11.6" fill="#3a4f94"/><circle cx="1.6" cy="1.6" r="0.5" fill="#8f9cc8"/><circle cx="4.6" cy="1.6" r="0.5" fill="#8f9cc8"/><circle cx="7.6" cy="1.6" r="0.5" fill="#8f9cc8"/><circle cx="1.6" cy="4.4" r="0.5" fill="#8f9cc8"/><circle cx="4.6" cy="4.4" r="0.5" fill="#8f9cc8"/><circle cx="7.6" cy="4.4" r="0.5" fill="#8f9cc8"/><circle cx="1.6" cy="7.2" r="0.5" fill="#8f9cc8"/><circle cx="4.6" cy="7.2" r="0.5" fill="#8f9cc8"/><circle cx="7.6" cy="7.2" r="0.5" fill="#8f9cc8"/><circle cx="1.6" cy="10.0" r="0.5" fill="#8f9cc8"/><circle cx="4.6" cy="10.0" r="0.5" fill="#8f9cc8"/><circle cx="7.6" cy="10.0" r="0.5" fill="#8f9cc8"/></svg></div><div class="c cn" style="left:1300.1px;top:229px">美国</div>
<div class="a" style="left:1520.4px;top:231px;width:22px;height:21px"><svg style="left:0;top:0" width="22" height="21" viewBox="0 0 22 22" preserveAspectRatio="none"><rect width="22" height="22" fill="#fff"/><rect y="0.00" width="22" height="1.7" fill="#d8425a"/><rect y="3.38" width="22" height="1.7" fill="#d8425a"/><rect y="6.77" width="22" height="1.7" fill="#d8425a"/><rect y="10.15" width="22" height="1.7" fill="#d8425a"/><rect y="13.54" width="22" height="1.7" fill="#d8425a"/><rect y="16.92" width="22" height="1.7" fill="#d8425a"/><rect y="20.31" width="22" height="1.7" fill="#d8425a"/><rect width="9.2" height="11.6" fill="#3a4f94"/><circle cx="1.6" cy="1.6" r="0.5" fill="#8f9cc8"/><circle cx="4.6" cy="1.6" r="0.5" fill="#8f9cc8"/><circle cx="7.6" cy="1.6" r="0.5" fill="#8f9cc8"/><circle cx="1.6" cy="4.4" r="0.5" fill="#8f9cc8"/><circle cx="4.6" cy="4.4" r="0.5" fill="#8f9cc8"/><circle cx="7.6" cy="4.4" r="0.5" fill="#8f9cc8"/><circle cx="1.6" cy="7.2" r="0.5" fill="#8f9cc8"/><circle cx="4.6" cy="7.2" r="0.5" fill="#8f9cc8"/><circle cx="7.6" cy="7.2" r="0.5" fill="#8f9cc8"/><circle cx="1.6" cy="10.0" r="0.5" fill="#8f9cc8"/><circle cx="4.6" cy="10.0" r="0.5" fill="#8f9cc8"/><circle cx="7.6" cy="10.0" r="0.5" fill="#8f9cc8"/></svg></div><div class="c cn" style="left:1548.6px;top:229px">美国</div>
<div class="c" style="left:1769.2px;top:229px">$0.00</div>
<div class="c" style="left:2017.7px;top:229px">6</div>
<div class="c" style="left:2266.2px;top:229px">2024-07-27</div>
<div class="a" style="left:512px;top:386px;width:1981px;height:1px;background:#e0e0e0"></div>
<div class="c u" style="left:526px;top:324.8px">DVD, VALUE $75.00, M…</div>
<div class="c lk u" style="left:775.1px;top:308.7px">SWANK MOTION PICT…</div>
<div class="c lk u" style="left:1023.6px;top:308.7px">CARNIVAL CRUISE LINE</div>
<div class="a" style="left:1271.9px;top:327px;width:22px;height:22px"><svg style="left:0;top:0" width="22" height="22" viewBox="0 0 22 22" preserveAspectRatio="none"><rect width="22" height="22" fill="#fff"/><rect y="0.00" width="22" height="1.7" fill="#d8425a"/><rect y="3.38" width="22" height="1.7" fill="#d8425a"/><rect y="6.77" width="22" height="1.7" fill="#d8425a"/><rect y="10.15" width="22" height="1.7" fill="#d8425a"/><rect y="13.54" width="22" height="1.7" fill="#d8425a"/><rect y="16.92" width="22" height="1.7" fill="#d8425a"/><rect y="20.31" width="22" height="1.7" fill="#d8425a"/><rect width="9.2" height="11.6" fill="#3a4f94"/><circle cx="1.6" cy="1.6" r="0.5" fill="#8f9cc8"/><circle cx="4.6" cy="1.6" r="0.5" fill="#8f9cc8"/><circle cx="7.6" cy="1.6" r="0.5" fill="#8f9cc8"/><circle cx="1.6" cy="4.4" r="0.5" fill="#8f9cc8"/><circle cx="4.6" cy="4.4" r="0.5" fill="#8f9cc8"/><circle cx="7.6" cy="4.4" r="0.5" fill="#8f9cc8"/><circle cx="1.6" cy="7.2" r="0.5" fill="#8f9cc8"/><circle cx="4.6" cy="7.2" r="0.5" fill="#8f9cc8"/><circle cx="7.6" cy="7.2" r="0.5" fill="#8f9cc8"/><circle cx="1.6" cy="10.0" r="0.5" fill="#8f9cc8"/><circle cx="4.6" cy="10.0" r="0.5" fill="#8f9cc8"/><circle cx="7.6" cy="10.0" r="0.5" fill="#8f9cc8"/></svg></div><div class="c cn" style="left:1300.1px;top:325px">美国</div>
<div class="a" style="left:1520.4px;top:327px;width:22px;height:22px"><svg style="left:0;top:0" width="22" height="22" viewBox="0 0 22 22" preserveAspectRatio="none"><rect width="22" height="22" fill="#fff"/><rect y="0.00" width="22" height="1.7" fill="#d8425a"/><rect y="3.38" width="22" height="1.7" fill="#d8425a"/><rect y="6.77" width="22" height="1.7" fill="#d8425a"/><rect y="10.15" width="22" height="1.7" fill="#d8425a"/><rect y="13.54" width="22" height="1.7" fill="#d8425a"/><rect y="16.92" width="22" height="1.7" fill="#d8425a"/><rect y="20.31" width="22" height="1.7" fill="#d8425a"/><rect width="9.2" height="11.6" fill="#3a4f94"/><circle cx="1.6" cy="1.6" r="0.5" fill="#8f9cc8"/><circle cx="4.6" cy="1.6" r="0.5" fill="#8f9cc8"/><circle cx="7.6" cy="1.6" r="0.5" fill="#8f9cc8"/><circle cx="1.6" cy="4.4" r="0.5" fill="#8f9cc8"/><circle cx="4.6" cy="4.4" r="0.5" fill="#8f9cc8"/><circle cx="7.6" cy="4.4" r="0.5" fill="#8f9cc8"/><circle cx="1.6" cy="7.2" r="0.5" fill="#8f9cc8"/><circle cx="4.6" cy="7.2" r="0.5" fill="#8f9cc8"/><circle cx="7.6" cy="7.2" r="0.5" fill="#8f9cc8"/><circle cx="1.6" cy="10.0" r="0.5" fill="#8f9cc8"/><circle cx="4.6" cy="10.0" r="0.5" fill="#8f9cc8"/><circle cx="7.6" cy="10.0" r="0.5" fill="#8f9cc8"/></svg></div><div class="c cn" style="left:1548.6px;top:325px">美国</div>
<div class="c" style="left:1769.2px;top:325px">$0.00</div>
<div class="c" style="left:2017.7px;top:325px">6</div>
<div class="c" style="left:2266.2px;top:325px">2024-07-27</div>
<div class="a" style="left:512px;top:483px;width:1981px;height:1px;background:#e0e0e0"></div>
<div class="c u" style="left:526px;top:406.5px">DOUSSIE SAWN WOO…</div>
<div class="c hs" style="left:526px;top:437.7px">440799</div>
<div class="c lk u" style="left:775.1px;top:405.7px">DAI HUNG EXPORT IM…</div>
<div class="c lk u" style="left:1023.6px;top:405.7px">-</div>
<div class="a" style="left:1271.9px;top:424px;width:22px;height:22px"><svg style="left:0;top:0" width="22" height="22" viewBox="0 0 22 22" preserveAspectRatio="none"><rect width="22" height="22" fill="#fff"/><rect width="7.3" height="22" fill="#0a8a5a"/><rect x="14.7" width="7.3" height="22" fill="#0a8a5a"/></svg></div><div class="c cn" style="left:1300.1px;top:422px">尼日利亚</div>
<div class="a" style="left:1520.4px;top:424px;width:22px;height:22px"><svg style="left:0;top:0" width="22" height="22" viewBox="0 0 22 22" preserveAspectRatio="none"><rect width="22" height="22" fill="#d8142a"/><polygon points="11.00,6.80 12.03,9.98 15.37,9.98 12.67,11.94 13.70,15.12 11.00,13.16 8.30,15.12 9.33,11.94 6.63,9.98 9.97,9.98" fill="#ffde3a"/></svg></div><div class="c cn" style="left:1548.6px;top:422px">越南</div>
<div class="c" style="left:1769.2px;top:422px">$0.00</div>
<div class="c" style="left:2017.7px;top:422px">438</div>
<div class="c" style="left:2266.2px;top:422px">2024-07-27</div>
<div class="a" style="left:512px;top:580px;width:1981px;height:1px;background:#e0e0e0"></div>
<div class="c u" style="left:526px;top:503.5px">OTHER,.</div>
<div class="c hs" style="left:526px;top:534.7px">03044900</div>
<div class="c lk u" style="left:775.1px;top:502.7px">S&amp;S FOOD VENTURE…</div>
<div class="c lk u" style="left:1023.6px;top:502.7px">LIHINI SEA FOODS PV…</div>
<div class="a" style="left:1271.9px;top:521px;width:22px;height:22px"><svg style="left:0;top:0" width="22" height="22" viewBox="0 0 22 22" preserveAspectRatio="none"><rect width="22" height="22" fill="#f5b800"/><rect x="1.2" y="2" width="3.6" height="18" fill="#0a7a3a"/><rect x="4.8" y="2" width="3.6" height="18" fill="#f58a00"/><rect x="9.6" y="2" width="11" height="18" fill="#8f2240"/><path d="M12.6 14.4 L13.2 9.6 L15 7.6 L16.8 8.6 L16 10.6 L17.8 11.4 L17.4 15.6 L16.2 15.6 L16 13 L14.4 13 L14 15.6 Z" fill="#f5c21a"/></svg></div><div class="c cn" style="left:1300.1px;top:519px">斯里兰卡</div>
<div class="a" style="left:1520.4px;top:521px;width:22px;height:22px;border:1px solid #b9b9b9;background:#fff"></div>
<div class="c" style="left:1769.2px;top:519px">$6891.70</div>
<div class="c" style="left:2017.7px;top:519px">432</div>
<div class="c" style="left:2266.2px;top:519px">2024-07-27</div>
<div class="a" style="left:512px;top:677px;width:1981px;height:1px;background:#e0e0e0"></div>
<div class="c u" style="left:526px;top:615.8px">COLD ROLLED STAINL…</div>
<div class="c lk u" style="left:775.1px;top:599.7px">BACKER EHP INC</div>
<div class="c lk u" style="left:1023.6px;top:599.7px">PPM SHENZHEN INC</div>
<div class="a" style="left:1271.9px;top:618px;width:22px;height:22px"><svg style="left:0;top:0" width="22" height="22" viewBox="0 0 22 22" preserveAspectRatio="none"><rect width="22" height="22" fill="#de2a12"/><polygon points="4.60,3.00 5.18,4.80 7.07,4.80 5.54,5.91 6.13,7.70 4.60,6.59 3.07,7.70 3.66,5.91 2.13,4.80 4.02,4.80" fill="#ffd21a"/><circle cx="8.6" cy="2.6" r="0.7" fill="#ffd21a"/><circle cx="10.2" cy="4.6" r="0.7" fill="#ffd21a"/><circle cx="10.2" cy="7.4" r="0.7" fill="#ffd21a"/><circle cx="8.6" cy="9.4" r="0.7" fill="#ffd21a"/></svg></div><div class="c cn" style="left:1300.1px;top:616px">中国</div>
<div class="a" style="left:1520.4px;top:618px;width:22px;height:22px"><svg style="left:0;top:0" width="22" height="22" viewBox="0 0 22 22" preserveAspectRatio="none"><rect width="22" height="22" fill="#fff"/><rect y="0.00" width="22" height="1.7" fill="#d8425a"/><rect y="3.38" width="22" height="1.7" fill="#d8425a"/><rect y="6.77" width="22" height="1.7" fill="#d8425a"/><rect y="10.15" width="22" height="1.7" fill="#d8425a"/><rect y="13.54" width="22" height="1.7" fill="#d8425a"/><rect y="16.92" width="22" height="1.7" fill="#d8425a"/><rect y="20.31" width="22" height="1.7" fill="#d8425a"/><rect width="9.2" height="11.6" fill="#3a4f94"/><circle cx="1.6" cy="1.6" r="0.5" fill="#8f9cc8"/><circle cx="4.6" cy="1.6" r="0.5" fill="#8f9cc8"/><circle cx="7.6" cy="1.6" r="0.5" fill="#8f9cc8"/><circle cx="1.6" cy="4.4" r="0.5" fill="#8f9cc8"/><circle cx="4.6" cy="4.4" r="0.5" fill="#8f9cc8"/><circle cx="7.6" cy="4.4" r="0.5" fill="#8f9cc8"/><circle cx="1.6" cy="7.2" r="0.5" fill="#8f9cc8"/><circle cx="4.6" cy="7.2" r="0.5" fill="#8f9cc8"/><circle cx="7.6" cy="7.2" r="0.5" fill="#8f9cc8"/><circle cx="1.6" cy="10.0" r="0.5" fill="#8f9cc8"/><circle cx="4.6" cy="10.0" r="0.5" fill="#8f9cc8"/><circle cx="7.6" cy="10.0" r="0.5" fill="#8f9cc8"/></svg></div><div class="c cn" style="left:1548.6px;top:616px">美国</div>
<div class="c" style="left:1769.2px;top:616px">$0.00</div>
<div class="c" style="left:2017.7px;top:616px">161</div>
<div class="c" style="left:2266.2px;top:616px">2024-07-27</div>
<div class="a" style="left:512px;top:774px;width:1981px;height:1px;background:#e0e0e0"></div>
<div class="c u" style="left:526px;top:697.5px">SUGAR ( CARGO IN T…</div>
<div class="c hs" style="left:526px;top:728.7px">17019910</div>
<div class="c lk u" style="left:775.1px;top:696.7px">OBAID KAWSAR LTD</div>
<div class="c lk u" style="left:1023.6px;top:696.7px">SHREE RENUKA SUG…</div>
<div class="a" style="left:1271.9px;top:715px;width:22px;height:22px"><svg style="left:0;top:0" width="22" height="22" viewBox="0 0 22 22" preserveAspectRatio="none"><rect width="22" height="22" fill="#fff"/><rect width="22" height="7.3" fill="#ff9a32"/><rect y="14.7" width="22" height="7.3" fill="#178a0e"/><circle cx="11" cy="11" r="2.5" fill="#9a9ad8" stroke="#4a4aa8" stroke-width="0.8"/></svg></div><div class="c cn" style="left:1300.1px;top:713px">印度</div>
<div class="a" style="left:1520.4px;top:715px;width:22px;height:22px"><svg style="left:0;top:0" width="22" height="22" viewBox="0 0 22 22" preserveAspectRatio="none"><rect width="7.4" height="22" fill="#000"/><rect x="7.3" width="7.4" height="22" fill="#c9050c"/><rect x="14.6" width="7.4" height="22" fill="#079a0b"/><circle cx="11" cy="11" r="3" fill="none" stroke="#f0b99a" stroke-width="1.1"/><circle cx="11" cy="11" r="1.2" fill="#e88a6a"/></svg></div><div class="c cn" style="left:1548.6px;top:713px">阿富汗</div>
<div class="c" style="left:1769.2px;top:713px">$66216.73</div>
<div class="c" style="left:2017.7px;top:713px">108000</div>
<div class="c" style="left:2266.2px;top:713px">2024-07-27</div>
<div class="a" style="left:512px;top:871px;width:1981px;height:1px;background:#e0e0e0"></div>
<div class="c u" style="left:526px;top:792.6px">SUGAR&nbsp; ( CARGO IN T…</div>
<div class="c hs" style="left:526px;top:825.7px">17019910</div>
<div class="c lk u" style="left:775.1px;top:792.5px">OBAID KAWSAR LTD</div>
<div class="c lk u" style="left:1023.6px;top:792.5px">SHREE RENUKA SUG…</div>
</div>
<div class="a" style="left:512px;top:1393px;width:1989px;height:1px;background:#e0e0e0"></div>
<div class="a" style="left:2493px;top:581px;width:8px;height:683px;background:#c3c3c3;border-radius:4px"></div>
<div class="t " style="left:1933.6px;top:1427.2px;font-size:17.9px;color:#606266;font-weight:350;line-height:40px;height:40px;">共 10 条</div>
<div class="a" style="left:2019px;top:1430px;width:134.6px;height:38px;border:1px solid #dcdcdc;border-radius:4px;background:#fff"></div>
<div class="t " style="left:2046px;top:1429.6px;font-size:17.5px;color:#606266;font-weight:350;line-height:40px;height:40px;">10条/页</div>
<svg style="left:2130px;top:1445px" width="14" height="9" viewBox="0 0 14 9"><path d="M1.2 1.2 L7 7 L12.8 1.2" fill="none" stroke="#c0c4cc" stroke-width="1.3"/></svg>
<div class="a" style="left:2181px;top:1430px;width:41px;height:38px;background:#f4f4f5;border-radius:3px"></div>
<svg style="left:2196.6px;top:1442px" width="9" height="14" viewBox="0 0 9 14"><path d="M7.2 1.2 L1.6 7 L7.2 12.8" fill="none" stroke="#b4b7bd" stroke-width="2"/></svg>
<div class="a" style="left:2235px;top:1430px;width:41px;height:38px;background:#2531a9;border-radius:3px;color:#fff;font-size:17.4px;font-weight:700;text-align:center;line-height:37px">1</div>
<div class="a" style="left:2289px;top:1430px;width:41px;height:38px;background:#f4f4f5;border-radius:3px"></div>
<svg style="left:2305.4px;top:1442px" width="9" height="14" viewBox="0 0 9 14"><path d="M1.8 1.2 L7.4 7 L1.8 12.8" fill="none" stroke="#b4b7bd" stroke-width="2"/></svg>
<div class="t " style="left:2368.4px;top:1428.6px;font-size:17.9px;color:#606266;font-weight:350;line-height:40px;height:40px;">前往</div>
<div class="a" style="left:2409px;top:1430px;width:61.6px;height:38px;border:1px solid #dcdcdc;border-radius:4px;background:#fff;color:#606266;font-size:17.4px;text-align:center;line-height:34.6px">1</div>
<div class="t " style="left:2476.6px;top:1428.6px;font-size:17.9px;color:#606266;font-weight:350;line-height:40px;height:40px;">页</div>
<div class="a" style="left:1468px;top:1443.9px;width:266px;height:38.8px;background:#fff;border:1px solid #b9c6e0;border-radius:3px;box-shadow:0 0 2px rgba(120,140,190,.5)"></div>
<svg style="left:1428px;top:1435px" width="54" height="52" viewBox="0 0 54 52"><defs><linearGradient id="sg" x1="0" y1="0" x2="0.6" y2="1"><stop offset="0" stop-color="#fb6e2a"/><stop offset="1" stop-color="#ee4d18"/></linearGradient></defs><g transform="translate(26.2,25) rotate(-16.5)"><rect x="-18.6" y="-17.6" width="37.2" height="35.2" rx="4.2" fill="url(#sg)"/><path d="M12.4 -7.6 C5 -12.4 -12 -11.6 -12 -4.4 C-12 2.6 12.6 -1.6 12.6 6 C12.6 13 -5 13.4 -12.6 8.6" fill="none" stroke="#fff" stroke-width="5.6"/></g></svg>
<div class="t" style="left:1487.6px;top:1443.6px;font-size:21.4px;font-weight:700;color:#0d6fdc;line-height:40px;height:40px">中</div>
<svg style="left:1525px;top:1452px" width="200" height="24" viewBox="0 0 200 24"><circle cx="4.6" cy="7.6" r="2.3" fill="#0d6fdc"/><path d="M14.6 9.6 A2.5 2.5 0 1 1 18 12 Q18 16.6 14.2 19.4 Q16.4 15.4 14.6 9.6 Z" fill="#0d6fdc"/><rect x="41" y="0.4" width="8.4" height="14.6" rx="4.2" fill="#0d6fdc"/><path d="M37.6 10 Q37.6 18 45.2 18 Q52.8 18 52.8 10 M45.2 18 V21.6 M42.6 22.4 H47.8" fill="none" stroke="#0d6fdc" stroke-width="2"/><rect x="71.6" y="3" width="21.8" height="16.6" rx="2.6" fill="#0d6fdc"/><g fill="#fff"><rect x="74.2" y="5.8" width="2.8" height="2.8"/><rect x="78.6" y="5.8" width="2.8" height="2.8"/><rect x="83" y="5.8" width="2.8" height="2.8"/><rect x="87.4" y="5.8" width="2.8" height="2.8"/><rect x="74.2" y="10" width="2.8" height="2.8"/><rect x="78.6" y="10" width="2.8" height="2.8"/><rect x="83" y="10" width="2.8" height="2.8"/><rect x="87.4" y="10" width="2.8" height="2.8"/><rect x="74.2" y="14.4" width="2.8" height="2.4"/><rect x="78.6" y="14.4" width="11.6" height="2.4"/></g><path d="M108 3.6 L113 1.6 Q118 4.8 123.4 1.6 L128.4 3.6 L130.6 9 L126.4 10.6 V22 H111 V10.6 L106.6 9 Z" fill="#0d6fdc"/><rect x="144.6" y="3.2" width="8.6" height="8.6" rx="2.2" fill="#0d6fdc"/><rect x="155.6" y="3.2" width="8.6" height="8.6" rx="2.2" fill="#0d6fdc"/><rect x="158.4" y="5.6" width="3.2" height="3.2" fill="#fff"/><rect x="144.6" y="13.8" width="8.6" height="8.6" rx="2.2" fill="#0d6fdc"/><rect x="155.6" y="13.8" width="8.6" height="8.6" rx="2.2" fill="#0d6fdc"/></svg>
<svg style="left:1698px;top:1445px" width="36" height="38" viewBox="0 0 36 38"><circle cx="16" cy="20" r="14.6" fill="#f7f5f3"/><path d="M3.6 16.4 Q5 12 11 12.6 L26 14 Q29.4 14.6 28.4 18.6 L27.6 20.4 Q19 24.6 7 22 Q3.4 20.6 3.6 16.4 Z" fill="#e8742a"/><circle cx="9.6" cy="19.4" r="1.6" fill="#222"/><circle cx="20.6" cy="18" r="1.8" fill="#222"/><path d="M7 24 Q9 26.6 12.4 25.6 M17 26.6 Q19.6 25.6 20.6 23" fill="none" stroke="#222" stroke-width="1.6"/><path d="M30.6 8 L32.2 11.8 L35.8 13.4 L32.2 15 L30.6 18.8 L29 15 L25.4 13.4 L29 11.8 Z" fill="#f8e04a"/></svg>
<div id="side" class="a">
<div class="it" style="top:0px">
<svg style="left:14px;top:14px" width="32" height="32" viewBox="0 0 32 32"><circle cx="16" cy="16" r="15.9" fill="#000"/><g transform="translate(5.9,5.4) scale(0.87)"><path d="M12.525.02c1.31-.02 2.61-.01 3.91-.02.08 1.53.63 3.09 1.75 4.17 1.12 1.11 2.7 1.62 4.24 1.79v4.03c-1.44-.05-2.89-.35-4.2-.97-.57-.26-1.1-.59-1.62-.93-.01 2.92.01 5.84-.02 8.75-.08 1.4-.54 2.79-1.35 3.94-1.31 1.92-3.58 3.17-5.91 3.21-1.43.08-2.86-.31-4.08-1.03-2.02-1.19-3.44-3.37-3.65-5.71-.02-.5-.03-1-.01-1.49.18-1.9 1.12-3.72 2.58-4.96 1.66-1.44 3.98-2.13 6.15-1.72.02 1.48-.04 2.96-.04 4.44-.99-.32-2.15-.23-3.02.37-.63.41-1.11 1.04-1.36 1.75-.21.51-.15 1.07-.14 1.61.24 1.64 1.82 3.02 3.5 2.87 1.12-.01 2.19-.66 2.77-1.61.19-.33.4-.67.41-1.06.1-1.79.06-3.57.07-5.36.01-4.03-.01-8.05.02-12.07z" fill="#25f4ee" transform="translate(-1.1,-1)"/><path d="M12.525.02c1.31-.02 2.61-.01 3.91-.02.08 1.53.63 3.09 1.75 4.17 1.12 1.11 2.7 1.62 4.24 1.79v4.03c-1.44-.05-2.89-.35-4.2-.97-.57-.26-1.1-.59-1.62-.93-.01 2.92.01 5.84-.02 8.75-.08 1.4-.54 2.79-1.35 3.94-1.31 1.92-3.58 3.17-5.91 3.21-1.43.08-2.86-.31-4.08-1.03-2.02-1.19-3.44-3.37-3.65-5.71-.02-.5-.03-1-.01-1.49.18-1.9 1.12-3.72 2.58-4.96 1.66-1.44 3.98-2.13 6.15-1.72.02 1.48-.04 2.96-.04 4.44-.99-.32-2.15-.23-3.02.37-.63.41-1.11 1.04-1.36 1.75-.21.51-.15 1.07-.14 1.61.24 1.64 1.82 3.02 3.5 2.87 1.12-.01 2.19-.66 2.77-1.61.19-.33.4-.67.41-1.06.1-1.79.06-3.57.07-5.36.01-4.03-.01-8.05.02-12.07z" fill="#fe2c55" transform="translate(1.1,1)"/><path d="M12.525.02c1.31-.02 2.61-.01 3.91-.02.08 1.53.63 3.09 1.75 4.17 1.12 1.11 2.7 1.62 4.24 1.79v4.03c-1.44-.05-2.89-.35-4.2-.97-.57-.26-1.1-.59-1.62-.93-.01 2.92.01 5.84-.02 8.75-.08 1.4-.54 2.79-1.35 3.94-1.31 1.92-3.58 3.17-5.91 3.21-1.43.08-2.86-.31-4.08-1.03-2.02-1.19-3.44-3.37-3.65-5.71-.02-.5-.03-1-.01-1.49.18-1.9 1.12-3.72 2.58-4.96 1.66-1.44 3.98-2.13 6.15-1.72.02 1.48-.04 2.96-.04 4.44-.99-.32-2.15-.23-3.02.37-.63.41-1.11 1.04-1.36 1.75-.21.51-.15 1.07-.14 1.61.24 1.64 1.82 3.02 3.5 2.87 1.12-.01 2.19-.66 2.77-1.61.19-.33.4-.67.41-1.06.1-1.79.06-3.57.07-5.36.01-4.03-.01-8.05.02-12.07z" fill="#fff"/></g></svg>
<div class="tx" style="left:69px"><span class="l" style="letter-spacing:0.3px">Tiktok&nbsp;</span>获客</div>
<svg style="left:345px;top:28px" width="12" height="6" viewBox="0 0 12 6"><path d="M0.6 0.3 H10.2 L5.4 5.2 Z" fill="#333"/></svg>
</div>
<div class="it" style="top:60px">
<svg style="left:41px;top:14px" width="32" height="32" viewBox="0 0 32 32"><circle cx="16" cy="16" r="15.9" fill="#000"/><g transform="translate(5.9,5.4) scale(0.87)"><path d="M12.525.02c1.31-.02 2.61-.01 3.91-.02.08 1.53.63 3.09 1.75 4.17 1.12 1.11 2.7 1.62 4.24 1.79v4.03c-1.44-.05-2.89-.35-4.2-.97-.57-.26-1.1-.59-1.62-.93-.01 2.92.01 5.84-.02 8.75-.08 1.4-.54 2.79-1.35 3.94-1.31 1.92-3.58 3.17-5.91 3.21-1.43.08-2.86-.31-4.08-1.03-2.02-1.19-3.44-3.37-3.65-5.71-.02-.5-.03-1-.01-1.49.18-1.9 1.12-3.72 2.58-4.96 1.66-1.44 3.98-2.13 6.15-1.72.02 1.48-.04 2.96-.04 4.44-.99-.32-2.15-.23-3.02.37-.63.41-1.11 1.04-1.36 1.75-.21.51-.15 1.07-.14 1.61.24 1.64 1.82 3.02 3.5 2.87 1.12-.01 2.19-.66 2.77-1.61.19-.33.4-.67.41-1.06.1-1.79.06-3.57.07-5.36.01-4.03-.01-8.05.02-12.07z" fill="#25f4ee" transform="translate(-1.1,-1)"/><path d="M12.525.02c1.31-.02 2.61-.01 3.91-.02.08 1.53.63 3.09 1.75 4.17 1.12 1.11 2.7 1.62 4.24 1.79v4.03c-1.44-.05-2.89-.35-4.2-.97-.57-.26-1.1-.59-1.62-.93-.01 2.92.01 5.84-.02 8.75-.08 1.4-.54 2.79-1.35 3.94-1.31 1.92-3.58 3.17-5.91 3.21-1.43.08-2.86-.31-4.08-1.03-2.02-1.19-3.44-3.37-3.65-5.71-.02-.5-.03-1-.01-1.49.18-1.9 1.12-3.72 2.58-4.96 1.66-1.44 3.98-2.13 6.15-1.72.02 1.48-.04 2.96-.04 4.44-.99-.32-2.15-.23-3.02.37-.63.41-1.11 1.04-1.36 1.75-.21.51-.15 1.07-.14 1.61.24 1.64 1.82 3.02 3.5 2.87 1.12-.01 2.19-.66 2.77-1.61.19-.33.4-.67.41-1.06.1-1.79.06-3.57.07-5.36.01-4.03-.01-8.05.02-12.07z" fill="#fe2c55" transform="translate(1.1,1)"/><path d="M12.525.02c1.31-.02 2.61-.01 3.91-.02.08 1.53.63 3.09 1.75 4.17 1.12 1.11 2.7 1.62 4.24 1.79v4.03c-1.44-.05-2.89-.35-4.2-.97-.57-.26-1.1-.59-1.62-.93-.01 2.92.01 5.84-.02 8.75-.08 1.4-.54 2.79-1.35 3.94-1.31 1.92-3.58 3.17-5.91 3.21-1.43.08-2.86-.31-4.08-1.03-2.02-1.19-3.44-3.37-3.65-5.71-.02-.5-.03-1-.01-1.49.18-1.9 1.12-3.72 2.58-4.96 1.66-1.44 3.98-2.13 6.15-1.72.02 1.48-.04 2.96-.04 4.44-.99-.32-2.15-.23-3.02.37-.63.41-1.11 1.04-1.36 1.75-.21.51-.15 1.07-.14 1.61.24 1.64 1.82 3.02 3.5 2.87 1.12-.01 2.19-.66 2.77-1.61.19-.33.4-.67.41-1.06.1-1.79.06-3.57.07-5.36.01-4.03-.01-8.05.02-12.07z" fill="#fff"/></g></svg>
<div class="tx" style="left:96px"><span class="l" style="letter-spacing:-0.4px">AI&nbsp;</span>视频制作</div>
</div>
<div class="it" style="top:120px">
<svg style="left:41px;top:14px" width="32" height="32" viewBox="0 0 32 32"><circle cx="16" cy="16" r="15.9" fill="#000"/><g transform="translate(5.9,5.4) scale(0.87)"><path d="M12.525.02c1.31-.02 2.61-.01 3.91-.02.08 1.53.63 3.09 1.75 4.17 1.12 1.11 2.7 1.62 4.24 1.79v4.03c-1.44-.05-2.89-.35-4.2-.97-.57-.26-1.1-.59-1.62-.93-.01 2.92.01 5.84-.02 8.75-.08 1.4-.54 2.79-1.35 3.94-1.31 1.92-3.58 3.17-5.91 3.21-1.43.08-2.86-.31-4.08-1.03-2.02-1.19-3.44-3.37-3.65-5.71-.02-.5-.03-1-.01-1.49.18-1.9 1.12-3.72 2.58-4.96 1.66-1.44 3.98-2.13 6.15-1.72.02 1.48-.04 2.96-.04 4.44-.99-.32-2.15-.23-3.02.37-.63.41-1.11 1.04-1.36 1.75-.21.51-.15 1.07-.14 1.61.24 1.64 1.82 3.02 3.5 2.87 1.12-.01 2.19-.66 2.77-1.61.19-.33.4-.67.41-1.06.1-1.79.06-3.57.07-5.36.01-4.03-.01-8.05.02-12.07z" fill="#25f4ee" transform="translate(-1.1,-1)"/><path d="M12.525.02c1.31-.02 2.61-.01 3.91-.02.08 1.53.63 3.09 1.75 4.17 1.12 1.11 2.7 1.62 4.24 1.79v4.03c-1.44-.05-2.89-.35-4.2-.97-.57-.26-1.1-.59-1.62-.93-.01 2.92.01 5.84-.02 8.75-.08 1.4-.54 2.79-1.35 3.94-1.31 1.92-3.58 3.17-5.91 3.21-1.43.08-2.86-.31-4.08-1.03-2.02-1.19-3.44-3.37-3.65-5.71-.02-.5-.03-1-.01-1.49.18-1.9 1.12-3.72 2.58-4.96 1.66-1.44 3.98-2.13 6.15-1.72.02 1.48-.04 2.96-.04 4.44-.99-.32-2.15-.23-3.02.37-.63.41-1.11 1.04-1.36 1.75-.21.51-.15 1.07-.14 1.61.24 1.64 1.82 3.02 3.5 2.87 1.12-.01 2.19-.66 2.77-1.61.19-.33.4-.67.41-1.06.1-1.79.06-3.57.07-5.36.01-4.03-.01-8.05.02-12.07z" fill="#fe2c55" transform="translate(1.1,1)"/><path d="M12.525.02c1.31-.02 2.61-.01 3.91-.02.08 1.53.63 3.09 1.75 4.17 1.12 1.11 2.7 1.62 4.24 1.79v4.03c-1.44-.05-2.89-.35-4.2-.97-.57-.26-1.1-.59-1.62-.93-.01 2.92.01 5.84-.02 8.75-.08 1.4-.54 2.79-1.35 3.94-1.31 1.92-3.58 3.17-5.91 3.21-1.43.08-2.86-.31-4.08-1.03-2.02-1.19-3.44-3.37-3.65-5.71-.02-.5-.03-1-.01-1.49.18-1.9 1.12-3.72 2.58-4.96 1.66-1.44 3.98-2.13 6.15-1.72.02 1.48-.04 2.96-.04 4.44-.99-.32-2.15-.23-3.02.37-.63.41-1.11 1.04-1.36 1.75-.21.51-.15 1.07-.14 1.61.24 1.64 1.82 3.02 3.5 2.87 1.12-.01 2.19-.66 2.77-1.61.19-.33.4-.67.41-1.06.1-1.79.06-3.57.07-5.36.01-4.03-.01-8.05.02-12.07z" fill="#fff"/></g></svg>
<div class="tx" style="left:96px"><span class="l" style="letter-spacing:-0.96px">TK&nbsp;AI</span>采集</div>
</div>
<div class="it" style="top:180px">
<svg style="left:41px;top:14px" width="32" height="32" viewBox="0 0 32 32"><circle cx="16" cy="16" r="15.9" fill="#000"/><g transform="translate(5.9,5.4) scale(0.87)"><path d="M12.525.02c1.31-.02 2.61-.01 3.91-.02.08 1.53.63 3.09 1.75 4.17 1.12 1.11 2.7 1.62 4.24 1.79v4.03c-1.44-.05-2.89-.35-4.2-.97-.57-.26-1.1-.59-1.62-.93-.01 2.92.01 5.84-.02 8.75-.08 1.4-.54 2.79-1.35 3.94-1.31 1.92-3.58 3.17-5.91 3.21-1.43.08-2.86-.31-4.08-1.03-2.02-1.19-3.44-3.37-3.65-5.71-.02-.5-.03-1-.01-1.49.18-1.9 1.12-3.72 2.58-4.96 1.66-1.44 3.98-2.13 6.15-1.72.02 1.48-.04 2.96-.04 4.44-.99-.32-2.15-.23-3.02.37-.63.41-1.11 1.04-1.36 1.75-.21.51-.15 1.07-.14 1.61.24 1.64 1.82 3.02 3.5 2.87 1.12-.01 2.19-.66 2.77-1.61.19-.33.4-.67.41-1.06.1-1.79.06-3.57.07-5.36.01-4.03-.01-8.05.02-12.07z" fill="#25f4ee" transform="translate(-1.1,-1)"/><path d="M12.525.02c1.31-.02 2.61-.01 3.91-.02.08 1.53.63 3.09 1.75 4.17 1.12 1.11 2.7 1.62 4.24 1.79v4.03c-1.44-.05-2.89-.35-4.2-.97-.57-.26-1.1-.59-1.62-.93-.01 2.92.01 5.84-.02 8.75-.08 1.4-.54 2.79-1.35 3.94-1.31 1.92-3.58 3.17-5.91 3.21-1.43.08-2.86-.31-4.08-1.03-2.02-1.19-3.44-3.37-3.65-5.71-.02-.5-.03-1-.01-1.49.18-1.9 1.12-3.72 2.58-4.96 1.66-1.44 3.98-2.13 6.15-1.72.02 1.48-.04 2.96-.04 4.44-.99-.32-2.15-.23-3.02.37-.63.41-1.11 1.04-1.36 1.75-.21.51-.15 1.07-.14 1.61.24 1.64 1.82 3.02 3.5 2.87 1.12-.01 2.19-.66 2.77-1.61.19-.33.4-.67.41-1.06.1-1.79.06-3.57.07-5.36.01-4.03-.01-8.05.02-12.07z" fill="#fe2c55" transform="translate(1.1,1)"/><path d="M12.525.02c1.31-.02 2.61-.01 3.91-.02.08 1.53.63 3.09 1.75 4.17 1.12 1.11 2.7 1.62 4.24 1.79v4.03c-1.44-.05-2.89-.35-4.2-.97-.57-.26-1.1-.59-1.62-.93-.01 2.92.01 5.84-.02 8.75-.08 1.4-.54 2.79-1.35 3.94-1.31 1.92-3.58 3.17-5.91 3.21-1.43.08-2.86-.31-4.08-1.03-2.02-1.19-3.44-3.37-3.65-5.71-.02-.5-.03-1-.01-1.49.18-1.9 1.12-3.72 2.58-4.96 1.66-1.44 3.98-2.13 6.15-1.72.02 1.48-.04 2.96-.04 4.44-.99-.32-2.15-.23-3.02.37-.63.41-1.11 1.04-1.36 1.75-.21.51-.15 1.07-.14 1.61.24 1.64 1.82 3.02 3.5 2.87 1.12-.01 2.19-.66 2.77-1.61.19-.33.4-.67.41-1.06.1-1.79.06-3.57.07-5.36.01-4.03-.01-8.05.02-12.07z" fill="#fff"/></g></svg>
<div class="tx" style="left:96px"><span class="l" style="letter-spacing:-0.96px">TK&nbsp;AI</span>筛选</div>
</div>
<div class="it" style="top:240px">
<svg style="left:41px;top:14px" width="32" height="32" viewBox="0 0 32 32"><circle cx="16" cy="16" r="15.9" fill="#000"/><g transform="translate(5.9,5.4) scale(0.87)"><path d="M12.525.02c1.31-.02 2.61-.01 3.91-.02.08 1.53.63 3.09 1.75 4.17 1.12 1.11 2.7 1.62 4.24 1.79v4.03c-1.44-.05-2.89-.35-4.2-.97-.57-.26-1.1-.59-1.62-.93-.01 2.92.01 5.84-.02 8.75-.08 1.4-.54 2.79-1.35 3.94-1.31 1.92-3.58 3.17-5.91 3.21-1.43.08-2.86-.31-4.08-1.03-2.02-1.19-3.44-3.37-3.65-5.71-.02-.5-.03-1-.01-1.49.18-1.9 1.12-3.72 2.58-4.96 1.66-1.44 3.98-2.13 6.15-1.72.02 1.48-.04 2.96-.04 4.44-.99-.32-2.15-.23-3.02.37-.63.41-1.11 1.04-1.36 1.75-.21.51-.15 1.07-.14 1.61.24 1.64 1.82 3.02 3.5 2.87 1.12-.01 2.19-.66 2.77-1.61.19-.33.4-.67.41-1.06.1-1.79.06-3.57.07-5.36.01-4.03-.01-8.05.02-12.07z" fill="#25f4ee" transform="translate(-1.1,-1)"/><path d="M12.525.02c1.31-.02 2.61-.01 3.91-.02.08 1.53.63 3.09 1.75 4.17 1.12 1.11 2.7 1.62 4.24 1.79v4.03c-1.44-.05-2.89-.35-4.2-.97-.57-.26-1.1-.59-1.62-.93-.01 2.92.01 5.84-.02 8.75-.08 1.4-.54 2.79-1.35 3.94-1.31 1.92-3.58 3.17-5.91 3.21-1.43.08-2.86-.31-4.08-1.03-2.02-1.19-3.44-3.37-3.65-5.71-.02-.5-.03-1-.01-1.49.18-1.9 1.12-3.72 2.58-4.96 1.66-1.44 3.98-2.13 6.15-1.72.02 1.48-.04 2.96-.04 4.44-.99-.32-2.15-.23-3.02.37-.63.41-1.11 1.04-1.36 1.75-.21.51-.15 1.07-.14 1.61.24 1.64 1.82 3.02 3.5 2.87 1.12-.01 2.19-.66 2.77-1.61.19-.33.4-.67.41-1.06.1-1.79.06-3.57.07-5.36.01-4.03-.01-8.05.02-12.07z" fill="#fe2c55" transform="translate(1.1,1)"/><path d="M12.525.02c1.31-.02 2.61-.01 3.91-.02.08 1.53.63 3.09 1.75 4.17 1.12 1.11 2.7 1.62 4.24 1.79v4.03c-1.44-.05-2.89-.35-4.2-.97-.57-.26-1.1-.59-1.62-.93-.01 2.92.01 5.84-.02 8.75-.08 1.4-.54 2.79-1.35 3.94-1.31 1.92-3.58 3.17-5.91 3.21-1.43.08-2.86-.31-4.08-1.03-2.02-1.19-3.44-3.37-3.65-5.71-.02-.5-.03-1-.01-1.49.18-1.9 1.12-3.72 2.58-4.96 1.66-1.44 3.98-2.13 6.15-1.72.02 1.48-.04 2.96-.04 4.44-.99-.32-2.15-.23-3.02.37-.63.41-1.11 1.04-1.36 1.75-.21.51-.15 1.07-.14 1.61.24 1.64 1.82 3.02 3.5 2.87 1.12-.01 2.19-.66 2.77-1.61.19-.33.4-.67.41-1.06.1-1.79.06-3.57.07-5.36.01-4.03-.01-8.05.02-12.07z" fill="#fff"/></g></svg>
<div class="tx" style="left:96px"><span class="l" style="letter-spacing:-1px">TK&nbsp;ARM</span>矩阵</div>
</div>
<div class="it" style="top:300px">
<svg style="left:41px;top:14px" width="32" height="32" viewBox="0 0 32 32"><circle cx="16" cy="16" r="15.9" fill="#000"/><g transform="translate(5.9,5.4) scale(0.87)"><path d="M12.525.02c1.31-.02 2.61-.01 3.91-.02.08 1.53.63 3.09 1.75 4.17 1.12 1.11 2.7 1.62 4.24 1.79v4.03c-1.44-.05-2.89-.35-4.2-.97-.57-.26-1.1-.59-1.62-.93-.01 2.92.01 5.84-.02 8.75-.08 1.4-.54 2.79-1.35 3.94-1.31 1.92-3.58 3.17-5.91 3.21-1.43.08-2.86-.31-4.08-1.03-2.02-1.19-3.44-3.37-3.65-5.71-.02-.5-.03-1-.01-1.49.18-1.9 1.12-3.72 2.58-4.96 1.66-1.44 3.98-2.13 6.15-1.72.02 1.48-.04 2.96-.04 4.44-.99-.32-2.15-.23-3.02.37-.63.41-1.11 1.04-1.36 1.75-.21.51-.15 1.07-.14 1.61.24 1.64 1.82 3.02 3.5 2.87 1.12-.01 2.19-.66 2.77-1.61.19-.33.4-.67.41-1.06.1-1.79.06-3.57.07-5.36.01-4.03-.01-8.05.02-12.07z" fill="#25f4ee" transform="translate(-1.1,-1)"/><path d="M12.525.02c1.31-.02 2.61-.01 3.91-.02.08 1.53.63 3.09 1.75 4.17 1.12 1.11 2.7 1.62 4.24 1.79v4.03c-1.44-.05-2.89-.35-4.2-.97-.57-.26-1.1-.59-1.62-.93-.01 2.92.01 5.84-.02 8.75-.08 1.4-.54 2.79-1.35 3.94-1.31 1.92-3.58 3.17-5.91 3.21-1.43.08-2.86-.31-4.08-1.03-2.02-1.19-3.44-3.37-3.65-5.71-.02-.5-.03-1-.01-1.49.18-1.9 1.12-3.72 2.58-4.96 1.66-1.44 3.98-2.13 6.15-1.72.02 1.48-.04 2.96-.04 4.44-.99-.32-2.15-.23-3.02.37-.63.41-1.11 1.04-1.36 1.75-.21.51-.15 1.07-.14 1.61.24 1.64 1.82 3.02 3.5 2.87 1.12-.01 2.19-.66 2.77-1.61.19-.33.4-.67.41-1.06.1-1.79.06-3.57.07-5.36.01-4.03-.01-8.05.02-12.07z" fill="#fe2c55" transform="translate(1.1,1)"/><path d="M12.525.02c1.31-.02 2.61-.01 3.91-.02.08 1.53.63 3.09 1.75 4.17 1.12 1.11 2.7 1.62 4.24 1.79v4.03c-1.44-.05-2.89-.35-4.2-.97-.57-.26-1.1-.59-1.62-.93-.01 2.92.01 5.84-.02 8.75-.08 1.4-.54 2.79-1.35 3.94-1.31 1.92-3.58 3.17-5.91 3.21-1.43.08-2.86-.31-4.08-1.03-2.02-1.19-3.44-3.37-3.65-5.71-.02-.5-.03-1-.01-1.49.18-1.9 1.12-3.72 2.58-4.96 1.66-1.44 3.98-2.13 6.15-1.72.02 1.48-.04 2.96-.04 4.44-.99-.32-2.15-.23-3.02.37-.63.41-1.11 1.04-1.36 1.75-.21.51-.15 1.07-.14 1.61.24 1.64 1.82 3.02 3.5 2.87 1.12-.01 2.19-.66 2.77-1.61.19-.33.4-.67.41-1.06.1-1.79.06-3.57.07-5.36.01-4.03-.01-8.05.02-12.07z" fill="#fff"/></g></svg>
<div class="tx" style="left:96px"><span class="l" style="letter-spacing:-0.95px">TK&nbsp;IOS</span>多号</div>
</div>
<div class="it" style="top:360px">
<svg style="left:41px;top:14px" width="32" height="32" viewBox="0 0 32 32"><circle cx="16" cy="16" r="15.9" fill="#000"/><g transform="translate(5.9,5.4) scale(0.87)"><path d="M12.525.02c1.31-.02 2.61-.01 3.91-.02.08 1.53.63 3.09 1.75 4.17 1.12 1.11 2.7 1.62 4.24 1.79v4.03c-1.44-.05-2.89-.35-4.2-.97-.57-.26-1.1-.59-1.62-.93-.01 2.92.01 5.84-.02 8.75-.08 1.4-.54 2.79-1.35 3.94-1.31 1.92-3.58 3.17-5.91 3.21-1.43.08-2.86-.31-4.08-1.03-2.02-1.19-3.44-3.37-3.65-5.71-.02-.5-.03-1-.01-1.49.18-1.9 1.12-3.72 2.58-4.96 1.66-1.44 3.98-2.13 6.15-1.72.02 1.48-.04 2.96-.04 4.44-.99-.32-2.15-.23-3.02.37-.63.41-1.11 1.04-1.36 1.75-.21.51-.15 1.07-.14 1.61.24 1.64 1.82 3.02 3.5 2.87 1.12-.01 2.19-.66 2.77-1.61.19-.33.4-.67.41-1.06.1-1.79.06-3.57.07-5.36.01-4.03-.01-8.05.02-12.07z" fill="#25f4ee" transform="translate(-1.1,-1)"/><path d="M12.525.02c1.31-.02 2.61-.01 3.91-.02.08 1.53.63 3.09 1.75 4.17 1.12 1.11 2.7 1.62 4.24 1.79v4.03c-1.44-.05-2.89-.35-4.2-.97-.57-.26-1.1-.59-1.62-.93-.01 2.92.01 5.84-.02 8.75-.08 1.4-.54 2.79-1.35 3.94-1.31 1.92-3.58 3.17-5.91 3.21-1.43.08-2.86-.31-4.08-1.03-2.02-1.19-3.44-3.37-3.65-5.71-.02-.5-.03-1-.01-1.49.18-1.9 1.12-3.72 2.58-4.96 1.66-1.44 3.98-2.13 6.15-1.72.02 1.48-.04 2.96-.04 4.44-.99-.32-2.15-.23-3.02.37-.63.41-1.11 1.04-1.36 1.75-.21.51-.15 1.07-.14 1.61.24 1.64 1.82 3.02 3.5 2.87 1.12-.01 2.19-.66 2.77-1.61.19-.33.4-.67.41-1.06.1-1.79.06-3.57.07-5.36.01-4.03-.01-8.05.02-12.07z" fill="#fe2c55" transform="translate(1.1,1)"/><path d="M12.525.02c1.31-.02 2.61-.01 3.91-.02.08 1.53.63 3.09 1.75 4.17 1.12 1.11 2.7 1.62 4.24 1.79v4.03c-1.44-.05-2.89-.35-4.2-.97-.57-.26-1.1-.59-1.62-.93-.01 2.92.01 5.84-.02 8.75-.08 1.4-.54 2.79-1.35 3.94-1.31 1.92-3.58 3.17-5.91 3.21-1.43.08-2.86-.31-4.08-1.03-2.02-1.19-3.44-3.37-3.65-5.71-.02-.5-.03-1-.01-1.49.18-1.9 1.12-3.72 2.58-4.96 1.66-1.44 3.98-2.13 6.15-1.72.02 1.48-.04 2.96-.04 4.44-.99-.32-2.15-.23-3.02.37-.63.41-1.11 1.04-1.36 1.75-.21.51-.15 1.07-.14 1.61.24 1.64 1.82 3.02 3.5 2.87 1.12-.01 2.19-.66 2.77-1.61.19-.33.4-.67.41-1.06.1-1.79.06-3.57.07-5.36.01-4.03-.01-8.05.02-12.07z" fill="#fff"/></g></svg>
<div class="tx" style="left:96px"><span class="l" style="letter-spacing:-0.95px">TK&nbsp;IOS</span>单号</div>
</div>
<div class="it" style="top:420px">
<svg style="left:41px;top:14px" width="32" height="32" viewBox="0 0 32 32"><circle cx="16" cy="16" r="15.9" fill="#000"/><g transform="translate(5.9,5.4) scale(0.87)"><path d="M12.525.02c1.31-.02 2.61-.01 3.91-.02.08 1.53.63 3.09 1.75 4.17 1.12 1.11 2.7 1.62 4.24 1.79v4.03c-1.44-.05-2.89-.35-4.2-.97-.57-.26-1.1-.59-1.62-.93-.01 2.92.01 5.84-.02 8.75-.08 1.4-.54 2.79-1.35 3.94-1.31 1.92-3.58 3.17-5.91 3.21-1.43.08-2.86-.31-4.08-1.03-2.02-1.19-3.44-3.37-3.65-5.71-.02-.5-.03-1-.01-1.49.18-1.9 1.12-3.72 2.58-4.96 1.66-1.44 3.98-2.13 6.15-1.72.02 1.48-.04 2.96-.04 4.44-.99-.32-2.15-.23-3.02.37-.63.41-1.11 1.04-1.36 1.75-.21.51-.15 1.07-.14 1.61.24 1.64 1.82 3.02 3.5 2.87 1.12-.01 2.19-.66 2.77-1.61.19-.33.4-.67.41-1.06.1-1.79.06-3.57.07-5.36.01-4.03-.01-8.05.02-12.07z" fill="#25f4ee" transform="translate(-1.1,-1)"/><path d="M12.525.02c1.31-.02 2.61-.01 3.91-.02.08 1.53.63 3.09 1.75 4.17 1.12 1.11 2.7 1.62 4.24 1.79v4.03c-1.44-.05-2.89-.35-4.2-.97-.57-.26-1.1-.59-1.62-.93-.01 2.92.01 5.84-.02 8.75-.08 1.4-.54 2.79-1.35 3.94-1.31 1.92-3.58 3.17-5.91 3.21-1.43.08-2.86-.31-4.08-1.03-2.02-1.19-3.44-3.37-3.65-5.71-.02-.5-.03-1-.01-1.49.18-1.9 1.12-3.72 2.58-4.96 1.66-1.44 3.98-2.13 6.15-1.72.02 1.48-.04 2.96-.04 4.44-.99-.32-2.15-.23-3.02.37-.63.41-1.11 1.04-1.36 1.75-.21.51-.15 1.07-.14 1.61.24 1.64 1.82 3.02 3.5 2.87 1.12-.01 2.19-.66 2.77-1.61.19-.33.4-.67.41-1.06.1-1.79.06-3.57.07-5.36.01-4.03-.01-8.05.02-12.07z" fill="#fe2c55" transform="translate(1.1,1)"/><path d="M12.525.02c1.31-.02 2.61-.01 3.91-.02.08 1.53.63 3.09 1.75 4.17 1.12 1.11 2.7 1.62 4.24 1.79v4.03c-1.44-.05-2.89-.35-4.2-.97-.57-.26-1.1-.59-1.62-.93-.01 2.92.01 5.84-.02 8.75-.08 1.4-.54 2.79-1.35 3.94-1.31 1.92-3.58 3.17-5.91 3.21-1.43.08-2.86-.31-4.08-1.03-2.02-1.19-3.44-3.37-3.65-5.71-.02-.5-.03-1-.01-1.49.18-1.9 1.12-3.72 2.58-4.96 1.66-1.44 3.98-2.13 6.15-1.72.02 1.48-.04 2.96-.04 4.44-.99-.32-2.15-.23-3.02.37-.63.41-1.11 1.04-1.36 1.75-.21.51-.15 1.07-.14 1.61.24 1.64 1.82 3.02 3.5 2.87 1.12-.01 2.19-.66 2.77-1.61.19-.33.4-.67.41-1.06.1-1.79.06-3.57.07-5.36.01-4.03-.01-8.05.02-12.07z" fill="#fff"/></g></svg>
<div class="tx" style="left:96px"><span class="l" style="letter-spacing:-1.22px">TK&nbsp;API</span>发布</div>
</div>
<div class="it" style="top:480px">
<svg style="left:41px;top:14px" width="32" height="32" viewBox="0 0 32 32"><circle cx="16" cy="16" r="15.9" fill="#000"/><g transform="translate(5.9,5.4) scale(0.87)"><path d="M12.525.02c1.31-.02 2.61-.01 3.91-.02.08 1.53.63 3.09 1.75 4.17 1.12 1.11 2.7 1.62 4.24 1.79v4.03c-1.44-.05-2.89-.35-4.2-.97-.57-.26-1.1-.59-1.62-.93-.01 2.92.01 5.84-.02 8.75-.08 1.4-.54 2.79-1.35 3.94-1.31 1.92-3.58 3.17-5.91 3.21-1.43.08-2.86-.31-4.08-1.03-2.02-1.19-3.44-3.37-3.65-5.71-.02-.5-.03-1-.01-1.49.18-1.9 1.12-3.72 2.58-4.96 1.66-1.44 3.98-2.13 6.15-1.72.02 1.48-.04 2.96-.04 4.44-.99-.32-2.15-.23-3.02.37-.63.41-1.11 1.04-1.36 1.75-.21.51-.15 1.07-.14 1.61.24 1.64 1.82 3.02 3.5 2.87 1.12-.01 2.19-.66 2.77-1.61.19-.33.4-.67.41-1.06.1-1.79.06-3.57.07-5.36.01-4.03-.01-8.05.02-12.07z" fill="#25f4ee" transform="translate(-1.1,-1)"/><path d="M12.525.02c1.31-.02 2.61-.01 3.91-.02.08 1.53.63 3.09 1.75 4.17 1.12 1.11 2.7 1.62 4.24 1.79v4.03c-1.44-.05-2.89-.35-4.2-.97-.57-.26-1.1-.59-1.62-.93-.01 2.92.01 5.84-.02 8.75-.08 1.4-.54 2.79-1.35 3.94-1.31 1.92-3.58 3.17-5.91 3.21-1.43.08-2.86-.31-4.08-1.03-2.02-1.19-3.44-3.37-3.65-5.71-.02-.5-.03-1-.01-1.49.18-1.9 1.12-3.72 2.58-4.96 1.66-1.44 3.98-2.13 6.15-1.72.02 1.48-.04 2.96-.04 4.44-.99-.32-2.15-.23-3.02.37-.63.41-1.11 1.04-1.36 1.75-.21.51-.15 1.07-.14 1.61.24 1.64 1.82 3.02 3.5 2.87 1.12-.01 2.19-.66 2.77-1.61.19-.33.4-.67.41-1.06.1-1.79.06-3.57.07-5.36.01-4.03-.01-8.05.02-12.07z" fill="#fe2c55" transform="translate(1.1,1)"/><path d="M12.525.02c1.31-.02 2.61-.01 3.91-.02.08 1.53.63 3.09 1.75 4.17 1.12 1.11 2.7 1.62 4.24 1.79v4.03c-1.44-.05-2.89-.35-4.2-.97-.57-.26-1.1-.59-1.62-.93-.01 2.92.01 5.84-.02 8.75-.08 1.4-.54 2.79-1.35 3.94-1.31 1.92-3.58 3.17-5.91 3.21-1.43.08-2.86-.31-4.08-1.03-2.02-1.19-3.44-3.37-3.65-5.71-.02-.5-.03-1-.01-1.49.18-1.9 1.12-3.72 2.58-4.96 1.66-1.44 3.98-2.13 6.15-1.72.02 1.48-.04 2.96-.04 4.44-.99-.32-2.15-.23-3.02.37-.63.41-1.11 1.04-1.36 1.75-.21.51-.15 1.07-.14 1.61.24 1.64 1.82 3.02 3.5 2.87 1.12-.01 2.19-.66 2.77-1.61.19-.33.4-.67.41-1.06.1-1.79.06-3.57.07-5.36.01-4.03-.01-8.05.02-12.07z" fill="#fff"/></g></svg>
<div class="tx" style="left:96px"><span class="l" style="letter-spacing:-0.96px">TK&nbsp;AI</span>直播</div>
</div>
<div class="it" style="top:540px">
<svg style="left:14px;top:14px" width="32" height="32" viewBox="0 0 32 32"><circle cx="16" cy="16" r="15.9" fill="#0dc13f"/><g transform="translate(5,5) scale(0.917)"><path d="M17.472 14.382c-.297-.149-1.758-.867-2.03-.967-.273-.099-.471-.148-.67.15-.197.297-.767.966-.94 1.164-.173.199-.347.223-.644.075-.297-.15-1.255-.463-2.39-1.475-.883-.788-1.48-1.761-1.653-2.059-.173-.297-.018-.458.13-.606.134-.133.298-.347.446-.52.149-.174.198-.298.298-.497.099-.198.05-.371-.025-.52-.075-.149-.669-1.612-.916-2.207-.242-.579-.487-.5-.669-.51-.173-.008-.371-.01-.57-.01-.198 0-.52.074-.792.372-.272.297-1.04 1.016-1.04 2.479 0 1.462 1.065 2.875 1.213 3.074.149.198 2.096 3.2 5.077 4.487.709.306 1.262.489 1.694.625.712.227 1.36.195 1.871.118.571-.085 1.758-.719 2.006-1.413.248-.694.248-1.289.173-1.413-.074-.124-.272-.198-.57-.347m-5.421 7.403h-.004a9.87 9.87 0 01-5.031-1.378l-.361-.214-3.741.982.998-3.648-.235-.374a9.86 9.86 0 01-1.51-5.26c.001-5.45 4.436-9.884 9.888-9.884 2.64 0 5.122 1.03 6.988 2.898a9.825 9.825 0 012.893 6.994c-.003 5.45-4.437 9.884-9.885 9.884m8.413-18.297A11.815 11.815 0 0012.05 0C5.495 0 .16 5.335.157 11.892c0 2.096.547 4.142 1.588 5.945L.057 24l6.305-1.654a11.882 11.882 0 005.683 1.448h.005c6.554 0 11.89-5.335 11.893-11.893a11.821 11.821 0 00-3.48-8.413z" fill="#fff"/></g></svg>
<div class="tx" style="left:69px"><span class="l" style="letter-spacing:0.36px">Whatsapp&nbsp;</span>获客</div>
<svg style="left:345px;top:28px" width="12" height="6" viewBox="0 0 12 6"><path d="M0.6 0.3 H10.2 L5.4 5.2 Z" fill="#333"/></svg>
</div>
<div class="it" style="top:600px">
<svg style="left:41px;top:14px" width="32" height="32" viewBox="0 0 32 32"><circle cx="16" cy="16" r="15.9" fill="#0dc13f"/><g transform="translate(5,5) scale(0.917)"><path d="M17.472 14.382c-.297-.149-1.758-.867-2.03-.967-.273-.099-.471-.148-.67.15-.197.297-.767.966-.94 1.164-.173.199-.347.223-.644.075-.297-.15-1.255-.463-2.39-1.475-.883-.788-1.48-1.761-1.653-2.059-.173-.297-.018-.458.13-.606.134-.133.298-.347.446-.52.149-.174.198-.298.298-.497.099-.198.05-.371-.025-.52-.075-.149-.669-1.612-.916-2.207-.242-.579-.487-.5-.669-.51-.173-.008-.371-.01-.57-.01-.198 0-.52.074-.792.372-.272.297-1.04 1.016-1.04 2.479 0 1.462 1.065 2.875 1.213 3.074.149.198 2.096 3.2 5.077 4.487.709.306 1.262.489 1.694.625.712.227 1.36.195 1.871.118.571-.085 1.758-.719 2.006-1.413.248-.694.248-1.289.173-1.413-.074-.124-.272-.198-.57-.347m-5.421 7.403h-.004a9.87 9.87 0 01-5.031-1.378l-.361-.214-3.741.982.998-3.648-.235-.374a9.86 9.86 0 01-1.51-5.26c.001-5.45 4.436-9.884 9.888-9.884 2.64 0 5.122 1.03 6.988 2.898a9.825 9.825 0 012.893 6.994c-.003 5.45-4.437 9.884-9.885 9.884m8.413-18.297A11.815 11.815 0 0012.05 0C5.495 0 .16 5.335.157 11.892c0 2.096.547 4.142 1.588 5.945L.057 24l6.305-1.654a11.882 11.882 0 005.683 1.448h.005c6.554 0 11.89-5.335 11.893-11.893a11.821 11.821 0 00-3.48-8.413z" fill="#fff"/></g></svg>
<div class="tx" style="left:96px"><span class="l" style="letter-spacing:0.18px">Whatsapp&nbsp;AI&nbsp;</span>权重</div>
</div>
<div class="it" style="top:660px">
<svg style="left:41px;top:14px" width="32" height="32" viewBox="0 0 32 32"><circle cx="16" cy="16" r="15.9" fill="#0dc13f"/><g transform="translate(5,5) scale(0.917)"><path d="M17.472 14.382c-.297-.149-1.758-.867-2.03-.967-.273-.099-.471-.148-.67.15-.197.297-.767.966-.94 1.164-.173.199-.347.223-.644.075-.297-.15-1.255-.463-2.39-1.475-.883-.788-1.48-1.761-1.653-2.059-.173-.297-.018-.458.13-.606.134-.133.298-.347.446-.52.149-.174.198-.298.298-.497.099-.198.05-.371-.025-.52-.075-.149-.669-1.612-.916-2.207-.242-.579-.487-.5-.669-.51-.173-.008-.371-.01-.57-.01-.198 0-.52.074-.792.372-.272.297-1.04 1.016-1.04 2.479 0 1.462 1.065 2.875 1.213 3.074.149.198 2.096 3.2 5.077 4.487.709.306 1.262.489 1.694.625.712.227 1.36.195 1.871.118.571-.085 1.758-.719 2.006-1.413.248-.694.248-1.289.173-1.413-.074-.124-.272-.198-.57-.347m-5.421 7.403h-.004a9.87 9.87 0 01-5.031-1.378l-.361-.214-3.741.982.998-3.648-.235-.374a9.86 9.86 0 01-1.51-5.26c.001-5.45 4.436-9.884 9.888-9.884 2.64 0 5.122 1.03 6.988 2.898a9.825 9.825 0 012.893 6.994c-.003 5.45-4.437 9.884-9.885 9.884m8.413-18.297A11.815 11.815 0 0012.05 0C5.495 0 .16 5.335.157 11.892c0 2.096.547 4.142 1.588 5.945L.057 24l6.305-1.654a11.882 11.882 0 005.683 1.448h.005c6.554 0 11.89-5.335 11.893-11.893a11.821 11.821 0 00-3.48-8.413z" fill="#fff"/></g></svg>
<div class="tx" style="left:96px"><span class="l" style="letter-spacing:0.18px">Whatsapp&nbsp;AI&nbsp;</span>耐发号</div>
</div>
<div class="it" style="top:720px">
<svg style="left:41px;top:14px" width="32" height="32" viewBox="0 0 32 32"><circle cx="16" cy="16" r="15.9" fill="#0dc13f"/><g transform="translate(5,5) scale(0.917)"><path d="M17.472 14.382c-.297-.149-1.758-.867-2.03-.967-.273-.099-.471-.148-.67.15-.197.297-.767.966-.94 1.164-.173.199-.347.223-.644.075-.297-.15-1.255-.463-2.39-1.475-.883-.788-1.48-1.761-1.653-2.059-.173-.297-.018-.458.13-.606.134-.133.298-.347.446-.52.149-.174.198-.298.298-.497.099-.198.05-.371-.025-.52-.075-.149-.669-1.612-.916-2.207-.242-.579-.487-.5-.669-.51-.173-.008-.371-.01-.57-.01-.198 0-.52.074-.792.372-.272.297-1.04 1.016-1.04 2.479 0 1.462 1.065 2.875 1.213 3.074.149.198 2.096 3.2 5.077 4.487.709.306 1.262.489 1.694.625.712.227 1.36.195 1.871.118.571-.085 1.758-.719 2.006-1.413.248-.694.248-1.289.173-1.413-.074-.124-.272-.198-.57-.347m-5.421 7.403h-.004a9.87 9.87 0 01-5.031-1.378l-.361-.214-3.741.982.998-3.648-.235-.374a9.86 9.86 0 01-1.51-5.26c.001-5.45 4.436-9.884 9.888-9.884 2.64 0 5.122 1.03 6.988 2.898a9.825 9.825 0 012.893 6.994c-.003 5.45-4.437 9.884-9.885 9.884m8.413-18.297A11.815 11.815 0 0012.05 0C5.495 0 .16 5.335.157 11.892c0 2.096.547 4.142 1.588 5.945L.057 24l6.305-1.654a11.882 11.882 0 005.683 1.448h.005c6.554 0 11.89-5.335 11.893-11.893a11.821 11.821 0 00-3.48-8.413z" fill="#fff"/></g></svg>
<div class="tx" style="left:96px"><span class="l" style="letter-spacing:0.18px">Whatsapp&nbsp;AI&nbsp;</span>拉群</div>
</div>
<div class="it" style="top:780px">
<svg style="left:41px;top:14px" width="32" height="32" viewBox="0 0 32 32"><circle cx="16" cy="16" r="15.9" fill="#0dc13f"/><g transform="translate(5,5) scale(0.917)"><path d="M17.472 14.382c-.297-.149-1.758-.867-2.03-.967-.273-.099-.471-.148-.67.15-.197.297-.767.966-.94 1.164-.173.199-.347.223-.644.075-.297-.15-1.255-.463-2.39-1.475-.883-.788-1.48-1.761-1.653-2.059-.173-.297-.018-.458.13-.606.134-.133.298-.347.446-.52.149-.174.198-.298.298-.497.099-.198.05-.371-.025-.52-.075-.149-.669-1.612-.916-2.207-.242-.579-.487-.5-.669-.51-.173-.008-.371-.01-.57-.01-.198 0-.52.074-.792.372-.272.297-1.04 1.016-1.04 2.479 0 1.462 1.065 2.875 1.213 3.074.149.198 2.096 3.2 5.077 4.487.709.306 1.262.489 1.694.625.712.227 1.36.195 1.871.118.571-.085 1.758-.719 2.006-1.413.248-.694.248-1.289.173-1.413-.074-.124-.272-.198-.57-.347m-5.421 7.403h-.004a9.87 9.87 0 01-5.031-1.378l-.361-.214-3.741.982.998-3.648-.235-.374a9.86 9.86 0 01-1.51-5.26c.001-5.45 4.436-9.884 9.888-9.884 2.64 0 5.122 1.03 6.988 2.898a9.825 9.825 0 012.893 6.994c-.003 5.45-4.437 9.884-9.885 9.884m8.413-18.297A11.815 11.815 0 0012.05 0C5.495 0 .16 5.335.157 11.892c0 2.096.547 4.142 1.588 5.945L.057 24l6.305-1.654a11.882 11.882 0 005.683 1.448h.005c6.554 0 11.89-5.335 11.893-11.893a11.821 11.821 0 00-3.48-8.413z" fill="#fff"/></g></svg>
<div class="tx" style="left:96px"><span class="l" style="letter-spacing:0.18px">Whatsapp&nbsp;AI&nbsp;</span>群发</div>
</div>
<div class="it" style="top:840px">
<svg style="left:41px;top:14px" width="32" height="32" viewBox="0 0 32 32"><circle cx="16" cy="16" r="15.9" fill="#0dc13f"/><g transform="translate(5,5) scale(0.917)"><path d="M17.472 14.382c-.297-.149-1.758-.867-2.03-.967-.273-.099-.471-.148-.67.15-.197.297-.767.966-.94 1.164-.173.199-.347.223-.644.075-.297-.15-1.255-.463-2.39-1.475-.883-.788-1.48-1.761-1.653-2.059-.173-.297-.018-.458.13-.606.134-.133.298-.347.446-.52.149-.174.198-.298.298-.497.099-.198.05-.371-.025-.52-.075-.149-.669-1.612-.916-2.207-.242-.579-.487-.5-.669-.51-.173-.008-.371-.01-.57-.01-.198 0-.52.074-.792.372-.272.297-1.04 1.016-1.04 2.479 0 1.462 1.065 2.875 1.213 3.074.149.198 2.096 3.2 5.077 4.487.709.306 1.262.489 1.694.625.712.227 1.36.195 1.871.118.571-.085 1.758-.719 2.006-1.413.248-.694.248-1.289.173-1.413-.074-.124-.272-.198-.57-.347m-5.421 7.403h-.004a9.87 9.87 0 01-5.031-1.378l-.361-.214-3.741.982.998-3.648-.235-.374a9.86 9.86 0 01-1.51-5.26c.001-5.45 4.436-9.884 9.888-9.884 2.64 0 5.122 1.03 6.988 2.898a9.825 9.825 0 012.893 6.994c-.003 5.45-4.437 9.884-9.885 9.884m8.413-18.297A11.815 11.815 0 0012.05 0C5.495 0 .16 5.335.157 11.892c0 2.096.547 4.142 1.588 5.945L.057 24l6.305-1.654a11.882 11.882 0 005.683 1.448h.005c6.554 0 11.89-5.335 11.893-11.893a11.821 11.821 0 00-3.48-8.413z" fill="#fff"/></g></svg>
<div class="tx" style="left:96px"><span class="l" style="letter-spacing:0px">Whatsapp&nbsp;API</span>群发</div>
</div>
<div class="it" style="top:900px">
<svg style="left:41px;top:14px" width="32" height="32" viewBox="0 0 32 32"><circle cx="16" cy="16" r="15.9" fill="#0dc13f"/><g transform="translate(5,5) scale(0.917)"><path d="M17.472 14.382c-.297-.149-1.758-.867-2.03-.967-.273-.099-.471-.148-.67.15-.197.297-.767.966-.94 1.164-.173.199-.347.223-.644.075-.297-.15-1.255-.463-2.39-1.475-.883-.788-1.48-1.761-1.653-2.059-.173-.297-.018-.458.13-.606.134-.133.298-.347.446-.52.149-.174.198-.298.298-.497.099-.198.05-.371-.025-.52-.075-.149-.669-1.612-.916-2.207-.242-.579-.487-.5-.669-.51-.173-.008-.371-.01-.57-.01-.198 0-.52.074-.792.372-.272.297-1.04 1.016-1.04 2.479 0 1.462 1.065 2.875 1.213 3.074.149.198 2.096 3.2 5.077 4.487.709.306 1.262.489 1.694.625.712.227 1.36.195 1.871.118.571-.085 1.758-.719 2.006-1.413.248-.694.248-1.289.173-1.413-.074-.124-.272-.198-.57-.347m-5.421 7.403h-.004a9.87 9.87 0 01-5.031-1.378l-.361-.214-3.741.982.998-3.648-.235-.374a9.86 9.86 0 01-1.51-5.26c.001-5.45 4.436-9.884 9.888-9.884 2.64 0 5.122 1.03 6.988 2.898a9.825 9.825 0 012.893 6.994c-.003 5.45-4.437 9.884-9.885 9.884m8.413-18.297A11.815 11.815 0 0012.05 0C5.495 0 .16 5.335.157 11.892c0 2.096.547 4.142 1.588 5.945L.057 24l6.305-1.654a11.882 11.882 0 005.683 1.448h.005c6.554 0 11.89-5.335 11.893-11.893a11.821 11.821 0 00-3.48-8.413z" fill="#fff"/></g></svg>
<div class="tx" style="left:96px"><span class="l" style="letter-spacing:0.18px">Whatsapp&nbsp;AI&nbsp;</span>采集</div>
</div>
<div class="it act" style="top:960px">
<svg style="left:41px;top:13.5px" width="32" height="32" viewBox="0 0 32 32"><circle cx="16" cy="16" r="15.9" fill="#0dc13f"/><g transform="translate(5,5) scale(0.917)"><path d="M17.472 14.382c-.297-.149-1.758-.867-2.03-.967-.273-.099-.471-.148-.67.15-.197.297-.767.966-.94 1.164-.173.199-.347.223-.644.075-.297-.15-1.255-.463-2.39-1.475-.883-.788-1.48-1.761-1.653-2.059-.173-.297-.018-.458.13-.606.134-.133.298-.347.446-.52.149-.174.198-.298.298-.497.099-.198.05-.371-.025-.52-.075-.149-.669-1.612-.916-2.207-.242-.579-.487-.5-.669-.51-.173-.008-.371-.01-.57-.01-.198 0-.52.074-.792.372-.272.297-1.04 1.016-1.04 2.479 0 1.462 1.065 2.875 1.213 3.074.149.198 2.096 3.2 5.077 4.487.709.306 1.262.489 1.694.625.712.227 1.36.195 1.871.118.571-.085 1.758-.719 2.006-1.413.248-.694.248-1.289.173-1.413-.074-.124-.272-.198-.57-.347m-5.421 7.403h-.004a9.87 9.87 0 01-5.031-1.378l-.361-.214-3.741.982.998-3.648-.235-.374a9.86 9.86 0 01-1.51-5.26c.001-5.45 4.436-9.884 9.888-9.884 2.64 0 5.122 1.03 6.988 2.898a9.825 9.825 0 012.893 6.994c-.003 5.45-4.437 9.884-9.885 9.884m8.413-18.297A11.815 11.815 0 0012.05 0C5.495 0 .16 5.335.157 11.892c0 2.096.547 4.142 1.588 5.945L.057 24l6.305-1.654a11.882 11.882 0 005.683 1.448h.005c6.554 0 11.89-5.335 11.893-11.893a11.821 11.821 0 00-3.48-8.413z" fill="#fff"/></g></svg>
<div class="tx" style="left:96px"><span class="l" style="letter-spacing:0.18px">Whatsapp&nbsp;AI&nbsp;</span>数据</div>
</div>
<div class="it" style="top:1020px">
<svg style="left:41px;top:14px" width="32" height="32" viewBox="0 0 32 32"><circle cx="16" cy="16" r="15.9" fill="#0dc13f"/><g transform="translate(5,5) scale(0.917)"><path d="M17.472 14.382c-.297-.149-1.758-.867-2.03-.967-.273-.099-.471-.148-.67.15-.197.297-.767.966-.94 1.164-.173.199-.347.223-.644.075-.297-.15-1.255-.463-2.39-1.475-.883-.788-1.48-1.761-1.653-2.059-.173-.297-.018-.458.13-.606.134-.133.298-.347.446-.52.149-.174.198-.298.298-.497.099-.198.05-.371-.025-.52-.075-.149-.669-1.612-.916-2.207-.242-.579-.487-.5-.669-.51-.173-.008-.371-.01-.57-.01-.198 0-.52.074-.792.372-.272.297-1.04 1.016-1.04 2.479 0 1.462 1.065 2.875 1.213 3.074.149.198 2.096 3.2 5.077 4.487.709.306 1.262.489 1.694.625.712.227 1.36.195 1.871.118.571-.085 1.758-.719 2.006-1.413.248-.694.248-1.289.173-1.413-.074-.124-.272-.198-.57-.347m-5.421 7.403h-.004a9.87 9.87 0 01-5.031-1.378l-.361-.214-3.741.982.998-3.648-.235-.374a9.86 9.86 0 01-1.51-5.26c.001-5.45 4.436-9.884 9.888-9.884 2.64 0 5.122 1.03 6.988 2.898a9.825 9.825 0 012.893 6.994c-.003 5.45-4.437 9.884-9.885 9.884m8.413-18.297A11.815 11.815 0 0012.05 0C5.495 0 .16 5.335.157 11.892c0 2.096.547 4.142 1.588 5.945L.057 24l6.305-1.654a11.882 11.882 0 005.683 1.448h.005c6.554 0 11.89-5.335 11.893-11.893a11.821 11.821 0 00-3.48-8.413z" fill="#fff"/></g></svg>
<div class="tx" style="left:96px"><span class="l" style="letter-spacing:0.18px">Whatsapp&nbsp;AI&nbsp;</span>裂变</div>
</div>
<div class="it" style="top:1080px">
<svg style="left:41px;top:14px" width="32" height="32" viewBox="0 0 32 32"><circle cx="16" cy="16" r="15.9" fill="#0dc13f"/><g transform="translate(5,5) scale(0.917)"><path d="M17.472 14.382c-.297-.149-1.758-.867-2.03-.967-.273-.099-.471-.148-.67.15-.197.297-.767.966-.94 1.164-.173.199-.347.223-.644.075-.297-.15-1.255-.463-2.39-1.475-.883-.788-1.48-1.761-1.653-2.059-.173-.297-.018-.458.13-.606.134-.133.298-.347.446-.52.149-.174.198-.298.298-.497.099-.198.05-.371-.025-.52-.075-.149-.669-1.612-.916-2.207-.242-.579-.487-.5-.669-.51-.173-.008-.371-.01-.57-.01-.198 0-.52.074-.792.372-.272.297-1.04 1.016-1.04 2.479 0 1.462 1.065 2.875 1.213 3.074.149.198 2.096 3.2 5.077 4.487.709.306 1.262.489 1.694.625.712.227 1.36.195 1.871.118.571-.085 1.758-.719 2.006-1.413.248-.694.248-1.289.173-1.413-.074-.124-.272-.198-.57-.347m-5.421 7.403h-.004a9.87 9.87 0 01-5.031-1.378l-.361-.214-3.741.982.998-3.648-.235-.374a9.86 9.86 0 01-1.51-5.26c.001-5.45 4.436-9.884 9.888-9.884 2.64 0 5.122 1.03 6.988 2.898a9.825 9.825 0 012.893 6.994c-.003 5.45-4.437 9.884-9.885 9.884m8.413-18.297A11.815 11.815 0 0012.05 0C5.495 0 .16 5.335.157 11.892c0 2.096.547 4.142 1.588 5.945L.057 24l6.305-1.654a11.882 11.882 0 005.683 1.448h.005c6.554 0 11.89-5.335 11.893-11.893a11.821 11.821 0 00-3.48-8.413z" fill="#fff"/></g></svg>
<div class="tx" style="left:96px"><span class="l" style="letter-spacing:0.18px">Whatsapp&nbsp;AI&nbsp;</span>筛选</div>
</div>
<div class="it" style="top:1140px">
<svg style="left:41px;top:14px" width="32" height="32" viewBox="0 0 32 32"><circle cx="16" cy="16" r="15.9" fill="#0dc13f"/><g transform="translate(5,5) scale(0.917)"><path d="M17.472 14.382c-.297-.149-1.758-.867-2.03-.967-.273-.099-.471-.148-.67.15-.197.297-.767.966-.94 1.164-.173.199-.347.223-.644.075-.297-.15-1.255-.463-2.39-1.475-.883-.788-1.48-1.761-1.653-2.059-.173-.297-.018-.458.13-.606.134-.133.298-.347.446-.52.149-.174.198-.298.298-.497.099-.198.05-.371-.025-.52-.075-.149-.669-1.612-.916-2.207-.242-.579-.487-.5-.669-.51-.173-.008-.371-.01-.57-.01-.198 0-.52.074-.792.372-.272.297-1.04 1.016-1.04 2.479 0 1.462 1.065 2.875 1.213 3.074.149.198 2.096 3.2 5.077 4.487.709.306 1.262.489 1.694.625.712.227 1.36.195 1.871.118.571-.085 1.758-.719 2.006-1.413.248-.694.248-1.289.173-1.413-.074-.124-.272-.198-.57-.347m-5.421 7.403h-.004a9.87 9.87 0 01-5.031-1.378l-.361-.214-3.741.982.998-3.648-.235-.374a9.86 9.86 0 01-1.51-5.26c.001-5.45 4.436-9.884 9.888-9.884 2.64 0 5.122 1.03 6.988 2.898a9.825 9.825 0 012.893 6.994c-.003 5.45-4.437 9.884-9.885 9.884m8.413-18.297A11.815 11.815 0 0012.05 0C5.495 0 .16 5.335.157 11.892c0 2.096.547 4.142 1.588 5.945L.057 24l6.305-1.654a11.882 11.882 0 005.683 1.448h.005c6.554 0 11.89-5.335 11.893-11.893a11.821 11.821 0 00-3.48-8.413z" fill="#fff"/></g></svg>
<div class="tx" style="left:96px"><span class="l" style="letter-spacing:0.18px">Whatsapp&nbsp;AI&nbsp;</span>代发</div>
</div>
<div class="it" style="top:1200px">
<svg style="left:14px;top:14px" width="32" height="32" viewBox="0 0 32 32"><circle cx="16" cy="16" r="15" fill="#fff"/><g transform="scale(1.3333)"><path d="M24 12.073c0-6.627-5.373-12-12-12s-12 5.373-12 12c0 5.99 4.388 10.954 10.125 11.854v-8.385H7.078v-3.47h3.047V9.43c0-3.007 1.792-4.669 4.533-4.669 1.312 0 2.686.235 2.686.235v2.953H15.83c-1.491 0-1.956.925-1.956 1.874v2.25h3.328l-.532 3.47h-2.796v8.385C19.612 23.027 24 18.062 24 12.073z" fill="#1d77f2"/></g></svg>
<div class="tx" style="left:69px"><span style="margin-left:-1.2px">社媒获客</span></div>
<svg style="left:345px;top:28px" width="12" height="6" viewBox="0 0 12 6"><path d="M0.6 0.3 H10.2 L5.4 5.2 Z" fill="#333"/></svg>
</div>
<div class="it" style="top:1260px">
<svg style="left:41px;top:14px" width="32" height="32" viewBox="0 0 32 32"><defs><linearGradient id="adg" x1="0" y1="0" x2="1" y2="0"><stop offset="0" stop-color="#0fc71f"/><stop offset="0.5" stop-color="#1fbb2e"/><stop offset="1" stop-color="#3b9b48"/></linearGradient></defs><circle cx="16" cy="16" r="15.9" fill="url(#adg)"/><g fill="#fff"><path d="M10 12.4 A6 5.6 0 0 1 22 12.4 Z"/><path d="M12.2 7.6 L11 5.6 M19.8 7.6 L21 5.6" stroke="#fff" stroke-width="0.9" stroke-linecap="round"/><path d="M10 13.4 H22 V21.6 Q22 22.8 20.8 22.8 H11.2 Q10 22.8 10 21.6 Z"/><rect x="6.4" y="13.2" width="2.6" height="7.6" rx="1.3"/><rect x="23" y="13.2" width="2.6" height="7.6" rx="1.3"/><rect x="12" y="21" width="2.7" height="6.2" rx="1.3"/><rect x="17.3" y="21" width="2.7" height="6.2" rx="1.3"/></g><circle cx="13.3" cy="9.8" r="0.7" fill="#1fbb2e"/><circle cx="18.7" cy="9.8" r="0.7" fill="#1fbb2e"/></svg>
<div class="tx" style="left:96px"><span style="margin-left:-1.2px">安卓矩阵管理</span></div>
</div>
<div class="it" style="top:1320px">
<svg style="left:41px;top:14px" width="32" height="32" viewBox="0 0 32 32"><defs><linearGradient id="fpg" x1="0" y1="0.5" x2="1" y2="0.4"><stop offset="0" stop-color="#e25ffb"/><stop offset="1" stop-color="#7a49ee"/></linearGradient></defs><circle cx="16" cy="16" r="13.8" fill="#fff" stroke="url(#fpg)" stroke-width="4.2"/><g fill="none" stroke="#a24fe8" stroke-width="1.5" stroke-linecap="round"><path d="M9.6 11 Q16 5.4 22.4 11"/><path d="M8.4 16.6 Q9 10.4 16 10.2 Q23 10.4 23.6 16.6"/><path d="M11 20.4 Q10.6 13 16 13 Q21.4 13 21 19.4"/><path d="M13.8 22.6 Q13 16 16 15.8 Q18.6 16 18.4 22"/><path d="M16 18.6 V24"/></g></svg>
<div class="tx" style="left:96px"><span style="margin-left:-1.2px">指纹矩阵管理</span></div>
</div>
<div class="it" style="top:1380px">
<svg style="left:41px;top:14px" width="32" height="32" viewBox="0 0 32 32"><defs><linearGradient id="igg" x1="0.5" y1="0" x2="0.5" y2="1"><stop offset="0" stop-color="#4a52d6"/><stop offset="0.25" stop-color="#8a3ec0"/><stop offset="0.5" stop-color="#e42b7c"/><stop offset="0.72" stop-color="#f0564a"/><stop offset="0.9" stop-color="#f9b34a"/><stop offset="1" stop-color="#fbd559"/></linearGradient></defs><circle cx="16" cy="16" r="15.9" fill="url(#igg)"/><rect x="6.6" y="6.6" width="18.8" height="18.8" rx="4" fill="none" stroke="#fff" stroke-width="1.7"/><circle cx="16" cy="16" r="4.6" fill="none" stroke="#fff" stroke-width="1.7"/><circle cx="21.4" cy="10.6" r="1.1" fill="#fff"/></svg>
<div class="tx" style="left:96px"><span class="l" style="letter-spacing:0px">Instagram</span>营销</div>
</div>
<div class="it" style="top:1440px">
<svg style="left:41px;top:14px" width="32" height="32" viewBox="0 0 32 32"><circle cx="16" cy="16" r="15" fill="#fff"/><g transform="scale(1.3333)"><path d="M24 12.073c0-6.627-5.373-12-12-12s-12 5.373-12 12c0 5.99 4.388 10.954 10.125 11.854v-8.385H7.078v-3.47h3.047V9.43c0-3.007 1.792-4.669 4.533-4.669 1.312 0 2.686.235 2.686.235v2.953H15.83c-1.491 0-1.956.925-1.956 1.874v2.25h3.328l-.532 3.47h-2.796v8.385C19.612 23.027 24 18.062 24 12.073z" fill="#1d77f2"/></g></svg>
<div class="tx" style="left:96px"><span class="l" style="letter-spacing:0.04px">Facebook&nbsp;</span>营销</div>
</div>
</div>
<div id="title" class="a">
<div class="t" style="left:15px;top:0;height:42px;line-height:42px;font-size:18px;color:#505050;font-weight:300">私域神器</div>
<div class="t" style="left:97.4px;top:-0.4px;height:42px;line-height:42px;font-size:19.6px;color:#4a4a4a;transform-origin:0 50%;transform:scaleX(.885);-webkit-text-stroke:0.4px #fff">(ID-386176)</div>
<div class="t" style="left:199.6px;top:-0.4px;height:42px;line-height:42px;font-size:19.6px;color:#4a4a4a;transform-origin:0 50%;transform:scaleX(.89);-webkit-text-stroke:0.4px #fff">Ver 3.2.9.2</div>
<svg style="left:2181.8px;top:10px" width="30" height="30" viewBox="0 0 30 30"><path d="M7.4 2.2 H24.6 Q26 2.2 26 3.6 V22" fill="none" stroke="#f47b2c" stroke-width="2.2"/><rect x="0" y="6" width="21.2" height="20.8" rx="2.6" fill="#f47b2c"/><text x="10.6" y="22.8" font-size="18.5" font-weight="400" fill="#fff" stroke="#fff" stroke-width="0.5" text-anchor="middle" font-family="Liberation Sans,sans-serif">T</text></svg>
<svg style="left:2228px;top:8.6px" width="30" height="30" viewBox="0 0 30 30"><defs><linearGradient id="aig" x1="0" y1="0" x2="1" y2="0"><stop offset="0" stop-color="#2bc8f4"/><stop offset="0.5" stop-color="#2bbdf4"/><stop offset="0.5" stop-color="#3a9cf5"/><stop offset="1" stop-color="#3a9cf5"/></linearGradient></defs><path d="M3.4 27 L4.8 22.6 A9.4 9.4 0 1 1 9 25.8 Z" fill="#fdd23a"/><circle cx="14" cy="21" r="5" fill="#f7a33a"/><path d="M27.2 24 L21.8 22.4 A10.6 10.6 0 1 1 25.4 19 Z" fill="url(#aig)"/><text x="17" y="16.4" font-size="9.4" font-weight="700" fill="#fff" text-anchor="middle" font-family="Liberation Sans,sans-serif">Ai</text></svg>
<svg style="left:2291px;top:14px" width="150" height="20" viewBox="0 0 150 20"><path d="M0.4 9.4 H12" stroke="#333" stroke-width="1.6" fill="none"/><rect x="64.6" y="5.4" width="8.8" height="8.6" rx="2" fill="none" stroke="#333" stroke-width="1.7"/><path d="M127.2 5.2 L137 15 M137 5.2 L127.2 15" stroke="#333" stroke-width="1.5" fill="none"/></svg>
</div>
<div id="nav" class="a">
<svg style="left:14px;top:14px" width="70" height="70" viewBox="0 0 70 70"><defs><linearGradient id="lg1" x1="0" y1="0" x2="0.3" y2="1"><stop offset="0" stop-color="#45b6dc"/><stop offset="1" stop-color="#3f8bf5"/></linearGradient><clipPath id="lc"><circle cx="34.5" cy="34.3" r="27.6"/></clipPath></defs><path d="M50.6 10.4 L54.6 8.4 L55.8 2.8 L58 8.8 L62.2 6 L61.6 11.6 L65.4 12.8 L62 15 L61.4 19 Z" fill="#f7981d"/><circle cx="55.8" cy="2.8" r="1" fill="#f7981d"/><circle cx="62.4" cy="5.8" r="1" fill="#f7981d"/><circle cx="65.6" cy="12.8" r="1" fill="#f7981d"/><circle cx="34.5" cy="34.3" r="29.7" fill="#fff" stroke="#f7981d" stroke-width="4.4"/><g clip-path="url(#lc)" fill="url(#lg1)"><path d="M28.4 9.4 L34.5 6.6 L59 20.5 L59 27 L58.2 27.4 Z"/><path d="M14.3 17.6 L20.4 13.6 L34.5 21.3 L28 25.2 Z"/><path d="M10 24.3 L10 31.5 L35.4 45.6 L41 42 Z"/><path d="M35.6 29.5 L41.8 26 L58.5 35.2 L58.5 47 L34.5 61.5 L10 47 L10 40 L34.5 54 L52 43.5 L52 38.7 Z"/></g><circle cx="57.4" cy="56.8" r="8.7" fill="#08a010" stroke="#fff" stroke-width="1.4"/></svg>
<div class="sep" style="top:108px"></div>
<svg style="left:35.6px;top:141.7px" width="26" height="24" viewBox="0 0 26 24"><path d="M13 1 C19.6 1 24.8 5 24.8 10 C24.8 15 19.6 19 13 19 C11.6 19 10.3 18.8 9.1 18.5 L3.2 22.3 L4.8 16.6 C2.5 14.9 1.2 12.6 1.2 10 C1.2 5 6.4 1 13 1 Z" fill="#fff"/><circle cx="8" cy="10.6" r="1.5" fill="#2433aa"/><circle cx="13" cy="10.6" r="1.5" fill="#2433aa"/><circle cx="18" cy="10.6" r="1.5" fill="#2433aa"/></svg>
<div class="lbl" style="top:171.9px">消息</div>
<div class="sep" style="top:219px"></div>
<svg style="left:35.6px;top:253.2px" width="26" height="22" viewBox="0 0 26 22"><path d="M9 4 V2.6 Q9 1 10.6 1 H15.4 Q17 1 17 2.6 V4" fill="none" stroke="#fff" stroke-width="1.6"/><path d="M1 6 Q1 4 3 4 H23 Q25 4 25 6 V8.2 L13 11.6 L1 8.2 Z" fill="#fff"/><path d="M1 10 L13 13.4 L25 10 V18.6 Q25 20.6 23 20.6 H3 Q1 20.6 1 18.6 Z" fill="#fff"/></svg>
<div class="lbl" style="top:282.9px">办公</div>
<div class="sep" style="top:330px"></div>
<svg style="left:36.6px;top:363px" width="24" height="24" viewBox="0 0 24 24"><polygon points="12.00,0.40 15.83,2.76 20.20,3.80 21.24,8.17 23.60,12.00 21.24,15.83 20.20,20.20 15.83,21.24 12.00,23.60 8.17,21.24 3.80,20.20 2.76,15.83 0.40,12.00 2.76,8.17 3.80,3.80 8.17,2.76" fill="#fff" stroke="#fff" stroke-width="1" stroke-linejoin="round"/><circle cx="12" cy="12" r="7.6" fill="#2433aa"/><circle cx="12" cy="12" r="6" fill="#fff"/><text x="12" y="15" font-size="8" font-weight="700" fill="#2433aa" text-anchor="middle" font-family="Liberation Sans,sans-serif">AI</text></svg>
<div class="lbl" style="top:393.6px;font-size:23.6px;font-weight:400;transform:scaleX(.81);-webkit-text-stroke:0.55px #2433aa">AIGC</div>
<div class="a" style="left:0;top:442px;width:97px;height:112px;background:#1f2a87"></div>
<svg style="left:36.1px;top:474.8px" width="26" height="24" viewBox="0 0 26 24"><circle cx="11.5" cy="7.2" r="6.4" fill="#fff"/><path d="M0.8 22 C1.6 16.5 5 13 9 13 H14 C17 13 19.5 15 21 18 V22 Z" fill="#fff"/><circle cx="18.8" cy="18" r="5.8" fill="#fff" stroke="#1f2a87" stroke-width="1.2"/><path d="M18.8 14.2 V21.8 M15 18 H22.6" stroke="#1f2a87" stroke-width="1.3" fill="none"/><circle cx="18.8" cy="18" r="3.4" fill="none" stroke="#1f2a87" stroke-width="1"/></svg>
<div class="lbl" style="top:504.9px">获客</div>
<div class="sep" style="top:552px"></div>
<svg style="left:36px;top:587.6px" width="26" height="20" viewBox="0 0 26 20"><path d="M1.2 0.5 V18 H25" fill="none" stroke="#fff" stroke-width="1.8"/><path d="M5 13.5 L10.5 8 L13.5 11.5 L20.5 4.5" fill="none" stroke="#fff" stroke-width="2.6"/><path d="M16.5 2 H24 V9.5 Z" fill="#fff"/></svg>
<div class="lbl" style="top:615.6px;font-size:23.6px;font-weight:400;transform:scaleX(.81);-webkit-text-stroke:0.55px #2433aa">SCRM</div>
<div class="sep" style="top:663px"></div>
<svg style="left:37px;top:696.6px" width="24" height="24" viewBox="0 0 24 24"><path d="M0.8 1.6 H3.6 L5.4 5" fill="none" stroke="#fff" stroke-width="1.8" stroke-linecap="round"/><path d="M4.6 4.4 H22.6 L20.4 15.6 H7.8 Z" fill="#fff"/><path d="M10.6 9.8 L12.8 12 L16.8 7.8" fill="none" stroke="#2433aa" stroke-width="1.5"/><circle cx="7.8" cy="20" r="2.3" fill="none" stroke="#fff" stroke-width="1.7"/><circle cx="18.4" cy="20" r="2.3" fill="none" stroke="#fff" stroke-width="1.7"/></svg>
<div class="lbl" style="top:726.9px">店铺</div>
<div class="sep" style="top:774px"></div>
<svg style="left:36.6px;top:810.3px" width="24" height="20" viewBox="0 0 24 20"><rect x="0.6" y="0.4" width="22.6" height="19" rx="2.2" fill="#fff"/><rect x="0.6" y="4" width="22.6" height="1" fill="#2433aa"/><circle cx="3.6" cy="2.3" r="0.7" fill="#2433aa"/><circle cx="6" cy="2.3" r="0.7" fill="#2433aa"/><text x="12" y="15.6" font-size="9" font-weight="700" fill="#2433aa" text-anchor="middle" font-family="Liberation Sans,sans-serif" textLength="17" lengthAdjust="spacingAndGlyphs">ADS</text></svg>
<div class="lbl" style="top:837.9px">广告</div>
<div class="sep" style="top:885px"></div>
<svg style="left:37.6px;top:920.6px" width="22" height="22" viewBox="0 0 22 22"><circle cx="11" cy="11" r="10.4" fill="#fff"/><path d="M11 4.6 A5.6 5.6 0 1 1 7.4 14.5 L5.4 16 L5.9 13.3 A5.6 5.6 0 0 1 11 4.6 Z" fill="#fff" stroke="#2433aa" stroke-width="1.3"/><text x="11" y="12.6" font-size="6" font-weight="700" fill="#2433aa" text-anchor="middle" font-family="Liberation Sans,sans-serif">AI</text></svg>
<div class="lbl" style="top:948.9px">客服</div>
<div class="a" style="left:46px;top:897px;width:45px;height:32px;border-radius:10px;background:#ff5a09;color:#fff;font-size:18.4px;line-height:32.6px;text-align:center;font-weight:300;-webkit-text-stroke:0.5px #ff5a09;letter-spacing:0.2px">99+</div>
<div class="sep" style="top:1387px"></div>
<svg style="left:36.6px;top:1422.4px" width="26" height="26" viewBox="0 0 26 26"><path d="M16.6 22.4 A11 11 0 1 1 22.6 15" fill="none" stroke="#fff" stroke-width="1.3"/><path d="M8.8 7.4 L12 11.6 L15.2 7.4 M12 11.6 V17.4 M8.8 12 H15.2 M8.8 14.6 H15.2" fill="none" stroke="#fff" stroke-width="1.3"/><path d="M19.2 15.4 V23.4 M15.2 19.4 H23.2" fill="none" stroke="#fff" stroke-width="1.3"/></svg>
<div class="lbl" style="top:1450.4px">充值</div>
</div>
</body></html>
